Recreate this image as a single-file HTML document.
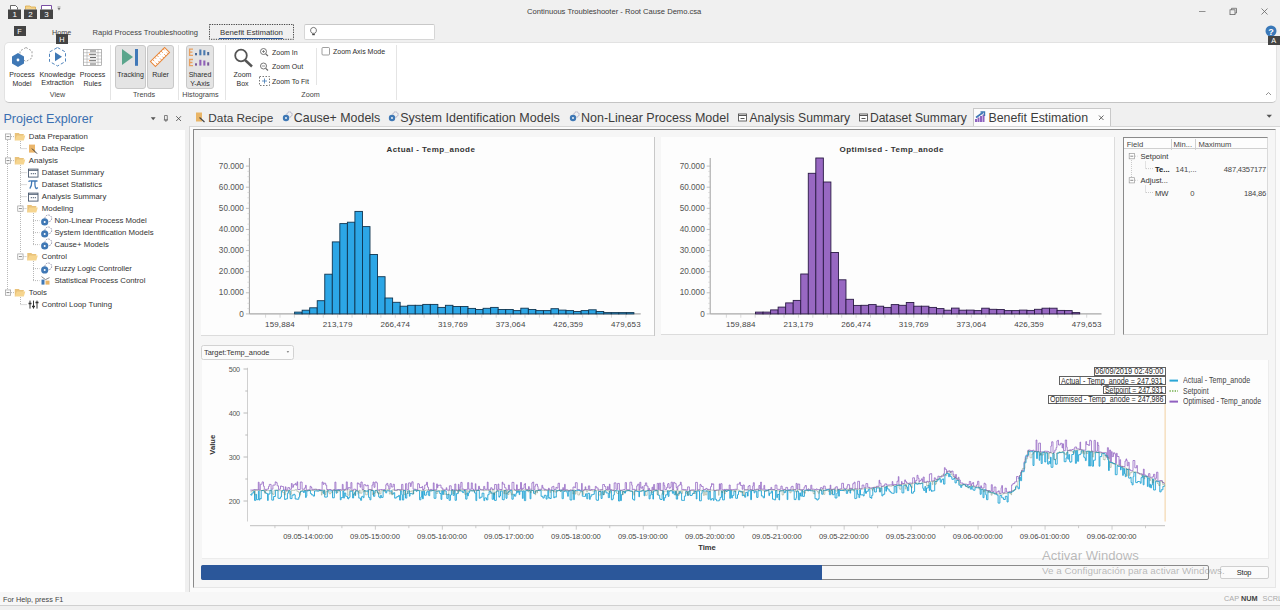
<!DOCTYPE html><html><head><meta charset="utf-8"><style>
html,body{margin:0;padding:0;width:1280px;height:610px;overflow:hidden;background:#f0f0f0;font-family:"Liberation Sans",sans-serif;}
.t{position:absolute;white-space:nowrap;line-height:1;}
.b{position:absolute;box-sizing:border-box;}
svg{position:absolute;overflow:visible;}
</style></head><body>
<div class="t" style="left:527px;top:7.7px;font-size:7.6px;color:#3c3c3c;font-weight:normal;">Continuous Troubleshooter - Root Cause Demo.csa</div>
<svg style="left:0;top:0" width="1280" height="45"><line x1="1199" y1="11.5" x2="1205.5" y2="11.5" stroke="#777" stroke-width="0.8"/><rect x="1230" y="9.8" width="5" height="4.8" fill="none" stroke="#666" stroke-width="0.8"/><path d="M1231.5 9.8 V8.3 H1236.5 V13 H1235" fill="none" stroke="#666" stroke-width="0.8"/><path d="M1261.5 8.5 L1267.5 14.5 M1267.5 8.5 L1261.5 14.5" stroke="#666" stroke-width="0.8"/></svg>
<svg style="left:0;top:0" width="80" height="45"><path d="M10.5 9.5 V5.5 H15.5 L17.5 7.5 V9.5" fill="#fff" stroke="#444" stroke-width="0.8"/><path d="M25.5 9.5 V6 H30 L31 7 H35.5 V9.5" fill="#f5d38a" stroke="#d9a94a" stroke-width="0.8"/><path d="M41.5 9.5 V5.5 H51.5 V9.5" fill="#fff" stroke="#7a4fa3" stroke-width="1"/><rect x="8" y="9.5" width="13" height="9.5" fill="#444"/><rect x="24" y="9.5" width="13" height="9.5" fill="#444"/><rect x="40" y="9.5" width="13" height="9.5" fill="#444"/><path d="M57.5 8 H60.5 L59 10.5 Z" fill="#777"/><line x1="57.5" y1="7" x2="60.5" y2="7" stroke="#777" stroke-width="0.7"/></svg>
<div class="t" style="left:12.5px;top:11px;font-size:8px;color:#fff;font-weight:normal;">1</div>
<div class="t" style="left:28.2px;top:11px;font-size:8px;color:#fff;font-weight:normal;">2</div>
<div class="t" style="left:44.2px;top:11px;font-size:8px;color:#fff;font-weight:normal;">3</div>
<div class="b" style="left:13.5px;top:26px;width:12.5px;height:10px;background:#444"></div>
<div class="t" style="left:17.3px;top:27.7px;font-size:7.3px;color:#fff;font-weight:normal;">F</div>
<div class="t" style="left:52px;top:29.01px;font-size:7.2px;color:#444;font-weight:normal;">Home</div>
<div class="b" style="left:56px;top:34px;width:12px;height:10px;background:#444;z-index:10"></div>
<div class="t" style="left:59.2px;top:35.5px;font-size:7.3px;color:#fff;font-weight:normal;z-index:11">H</div>
<div class="t" style="left:92.5px;top:28.97px;font-size:7.6px;color:#444;font-weight:normal;">Rapid Process Troubleshooting</div>
<svg style="left:0;top:0" width="300" height="45"><rect x="209.5" y="24.5" width="84" height="14.8" fill="none" stroke="#333" stroke-width="0.9" stroke-dasharray="1.3 1.1"/></svg>
<div class="t" style="left:220px;top:29.00px;font-size:7.8px;color:#333;font-weight:normal;">Benefit Estimation</div>
<div class="b" style="left:219px;top:37.5px;width:64px;height:1.5px;background:#2b5797"></div>
<div class="b" style="left:303.6px;top:24.2px;width:131.8px;height:15.4px;background:#fff;border:1px solid #d6d6d6;border-top-color:#c8c8c8;border-radius:2px"></div>
<svg style="left:0;top:0" width="330" height="45"><path d="M312 33.3 Q310.3 31.8 310.6 29.8 Q311 27.5 313.5 27.4 Q316 27.5 316.4 29.8 Q316.7 31.8 315 33.3 Z" fill="none" stroke="#555" stroke-width="0.8"/><line x1="312.2" y1="34.6" x2="314.8" y2="34.6" stroke="#444" stroke-width="1.2"/></svg>
<svg style="left:0;top:0" width="1280" height="50"><circle cx="1271" cy="31" r="5.5" fill="#3a78b8"/><text x="1271" y="34.5" font-size="9" font-weight="bold" fill="#fff" text-anchor="middle" font-family="Liberation Sans">?</text></svg>
<div class="b" style="left:1267.5px;top:35.5px;width:12.5px;height:9px;background:#444;z-index:10"></div>
<div class="t" style="left:1271.2px;top:36.8px;font-size:7.3px;color:#fff;font-weight:normal;z-index:11">A</div>
<div class="b" style="left:4px;top:42px;width:1273px;height:61.2px;background:#fff;border-radius:5px;border:1px solid #e2e2e2;border-bottom:1.2px solid #c4c4c4"></div>
<div class="t" style="left:-78px;width:200px;text-align:center;top:70.87px;font-size:7.0px;color:#2c2c2c;font-weight:normal;">Process</div>
<div class="t" style="left:-78px;width:200px;text-align:center;top:79.57px;font-size:7.0px;color:#2c2c2c;font-weight:normal;">Model</div>
<div class="t" style="left:-42.5px;width:200px;text-align:center;top:70.62px;font-size:7.3px;color:#2c2c2c;font-weight:normal;">Knowledge</div>
<div class="t" style="left:-42.5px;width:200px;text-align:center;top:79.32px;font-size:7.3px;color:#2c2c2c;font-weight:normal;">Extraction</div>
<div class="t" style="left:-7.5px;width:200px;text-align:center;top:70.87px;font-size:7.0px;color:#2c2c2c;font-weight:normal;">Process</div>
<div class="t" style="left:-7.5px;width:200px;text-align:center;top:79.57px;font-size:7.0px;color:#2c2c2c;font-weight:normal;">Rules</div>
<div class="t" style="left:-42.5px;width:200px;text-align:center;top:91.01px;font-size:7.2px;color:#444;font-weight:normal;">View</div>
<div class="b" style="left:110px;top:45px;width:1px;height:55px;background:#e4e4e4"></div>
<div class="b" style="left:177.5px;top:45px;width:1px;height:55px;background:#e4e4e4"></div>
<div class="b" style="left:224.5px;top:45px;width:1px;height:55px;background:#e4e4e4"></div>
<div class="b" style="left:395.5px;top:45px;width:1px;height:55px;background:#e4e4e4"></div>
<div class="b" style="left:315.5px;top:48px;width:1px;height:37px;background:#e4e4e4"></div>
<svg style="left:0;top:0" width="400" height="100"><path d="M26 47.5 L32 51 L32 58 L26 61.5 L20 58 L20 51 Z" fill="none" stroke="#777" stroke-width="0.7" stroke-dasharray="2 1.6"/><path d="M18 53 L24 56.5 L24 63.5 L18 67 L12 63.5 L12 56.5 Z" fill="#3f78b5"/><circle cx="18" cy="60" r="1.4" fill="#fff"/><path d="M57.5 47.5 L65.5 52 L65.5 61.5 L57.5 66 L49.5 61.5 L49.5 52 Z" fill="none" stroke="#3f78b5" stroke-width="0.9" stroke-dasharray="3.2 2"/><path d="M55 52.3 L62 56.8 L55 61.3 Z" fill="#3f78b5"/><rect x="83.5" y="49.5" width="18" height="16" fill="#fff" stroke="#888" stroke-width="0.6"/><path d="M83.5 52.7 H101.5 M83.5 55.9 H101.5 M83.5 59.1 H101.5 M83.5 62.3 H101.5 M87 49.5 V65.5 M98 49.5 V65.5" stroke="#999" stroke-width="0.5"/><path d="M90 51 H96 M90 54.3 H96 M90 57.5 H96 M90 60.7 H96 M90 64 H96" stroke="#444" stroke-width="0.8"/><path d="M89 54.3 h1 M89 60.7 h1" stroke="#e07b39" stroke-width="1"/></svg>
<div class="b" style="left:115.3px;top:45px;width:30.5px;height:43.5px;background:#e4e4e4;border:1px solid #c8c8c8;border-radius:3px"></div>
<div class="b" style="left:146.8px;top:45px;width:27.5px;height:43.5px;background:#e4e4e4;border:1px solid #c8c8c8;border-radius:3px"></div>
<div class="b" style="left:186px;top:45px;width:28px;height:43.5px;background:#e4e4e4;border:1px solid #c8c8c8;border-radius:3px"></div>
<svg style="left:0;top:0" width="400" height="100"><path d="M122 49 L133 57 L122 65 Z" fill="#5aa58c"/><rect x="135" y="49" width="3" height="16.8" fill="#4078b8"/><g transform="translate(160 57) rotate(-45)"><rect x="-10" y="-3.5" width="20" height="7" fill="#fff" stroke="#e8873a" stroke-width="1"/><path d="M-7 -3.5 v2.5 M-4 -3.5 v2 M-1 -3.5 v2.5 M2 -3.5 v2 M5 -3.5 v2.5 M8 -3.5 v2 M-7 3.5 v-2.5 M-4 3.5 v-2 M-1 3.5 v-2.5 M2 3.5 v-2 M5 3.5 v-2.5 M8 3.5 v-2" stroke="#e8873a" stroke-width="0.8"/></g><path d="M193 49.2 H189.6 V55.3 H193 M189.6 52.2 H192.5" fill="none" stroke="#e8a060" stroke-width="1.3"/><path d="M193 59.5 H189.6 V65.6 H193 M189.6 62.5 H192.5" fill="none" stroke="#e8a060" stroke-width="1.3"/><rect x="195" y="53" width="2" height="2.3" fill="#4a6a98"/><rect x="199.3" y="49.5" width="2.1" height="5.8" fill="#4a7ab0"/><rect x="203.3" y="50.2" width="2.1" height="5.1" fill="#4a7ab0"/><rect x="207.2" y="52" width="2" height="3.3" fill="#4a6a98"/><rect x="195" y="63.3" width="2" height="2.3" fill="#7a5a9a"/><rect x="199.3" y="59.8" width="2.1" height="5.8" fill="#9060b8"/><rect x="203.3" y="60.5" width="2.1" height="5.1" fill="#9060b8"/><rect x="207.2" y="62.3" width="2" height="3.3" fill="#7a5a9a"/><circle cx="241" cy="55.5" r="5.8" fill="none" stroke="#555" stroke-width="1.8"/><line x1="245" y1="60" x2="252" y2="66.5" stroke="#555" stroke-width="2.4"/><circle cx="263.5" cy="51.5" r="3" fill="none" stroke="#666" stroke-width="0.9"/><line x1="265.7" y1="53.8" x2="268" y2="56" stroke="#666" stroke-width="1.1"/><path d="M262 51.5 h3 M263.5 50 v3" stroke="#666" stroke-width="0.7"/><circle cx="263.5" cy="66" r="3" fill="none" stroke="#666" stroke-width="0.9"/><line x1="265.7" y1="68.3" x2="268" y2="70.5" stroke="#666" stroke-width="1.1"/><path d="M262 66 h3" stroke="#666" stroke-width="0.7"/><rect x="259.5" y="76.5" width="10" height="9" fill="none" stroke="#555" stroke-width="0.8" stroke-dasharray="1.5 1.5"/><path d="M262 81 h5 M264.5 78.5 v5" stroke="#3f78b5" stroke-width="0.8"/><rect x="322" y="47.5" width="7.5" height="7.5" rx="1" fill="#fff" stroke="#777" stroke-width="0.7"/></svg>
<div class="t" style="left:30.5px;width:200px;text-align:center;top:70.87px;font-size:7.0px;color:#2c2c2c;font-weight:normal;">Tracking</div>
<div class="t" style="left:60.5px;width:200px;text-align:center;top:70.87px;font-size:7.0px;color:#2c2c2c;font-weight:normal;">Ruler</div>
<div class="t" style="left:100px;width:200px;text-align:center;top:70.87px;font-size:7.0px;color:#2c2c2c;font-weight:normal;">Shared</div>
<div class="t" style="left:100px;width:200px;text-align:center;top:79.57px;font-size:7.0px;color:#2c2c2c;font-weight:normal;">Y-Axis</div>
<div class="t" style="left:44px;width:200px;text-align:center;top:91.01px;font-size:7.2px;color:#444;font-weight:normal;">Trends</div>
<div class="t" style="left:100.5px;width:200px;text-align:center;top:91.01px;font-size:7.2px;color:#444;font-weight:normal;">Histograms</div>
<div class="t" style="left:142.5px;width:200px;text-align:center;top:70.87px;font-size:7.0px;color:#2c2c2c;font-weight:normal;">Zoom</div>
<div class="t" style="left:142.5px;width:200px;text-align:center;top:79.57px;font-size:7.0px;color:#2c2c2c;font-weight:normal;">Box</div>
<div class="t" style="left:272px;top:48.57px;font-size:7.0px;color:#2c2c2c;font-weight:normal;">Zoom In</div>
<div class="t" style="left:272px;top:63.07px;font-size:7.0px;color:#2c2c2c;font-weight:normal;">Zoom Out</div>
<div class="t" style="left:272px;top:78.07px;font-size:7.0px;color:#2c2c2c;font-weight:normal;">Zoom To Fit</div>
<div class="t" style="left:333px;top:47.57px;font-size:7.0px;color:#2c2c2c;font-weight:normal;">Zoom Axis Mode</div>
<div class="t" style="left:210.5px;width:200px;text-align:center;top:91.01px;font-size:7.2px;color:#444;font-weight:normal;">Zoom</div>
<svg style="left:0;top:0" width="1280" height="100"><path d="M1266 95 L1268.5 92.5 L1271 95" fill="none" stroke="#777" stroke-width="0.8"/></svg>
<div class="t" style="left:3.4px;top:112.93px;font-size:12.6px;color:#3a6fb0;font-weight:normal;">Project Explorer</div>
<svg style="left:0;top:0" width="200" height="130"><path d="M150.8 117.3 H155.6 L153.2 120.3 Z" fill="#555"/><path d="M164.5 115.5 h2.8 v4.5 h-2.8 z M163.8 120 h4.2 M165.9 120 v2" stroke="#666" stroke-width="0.8" fill="none"/><path d="M176.2 116.2 L181 121 M181 116.2 L176.2 121" stroke="#444" stroke-width="0.8"/></svg>
<div class="b" style="left:0;top:129.5px;width:185px;height:462.5px;background:#fff"></div>
<div class="t" style="left:28.8px;top:132.60px;font-size:7.8px;color:#333;font-weight:normal;">Data Preparation</div>
<div class="t" style="left:41.8px;top:144.60px;font-size:7.8px;color:#333;font-weight:normal;">Data Recipe</div>
<div class="t" style="left:28.8px;top:156.60px;font-size:7.8px;color:#333;font-weight:normal;">Analysis</div>
<div class="t" style="left:41.8px;top:168.60px;font-size:7.8px;color:#333;font-weight:normal;">Dataset Summary</div>
<div class="t" style="left:41.8px;top:180.60px;font-size:7.8px;color:#333;font-weight:normal;">Dataset Statistics</div>
<div class="t" style="left:41.8px;top:192.60px;font-size:7.8px;color:#333;font-weight:normal;">Analysis Summary</div>
<div class="t" style="left:41.8px;top:204.60px;font-size:7.8px;color:#333;font-weight:normal;">Modeling</div>
<div class="t" style="left:54.4px;top:216.60px;font-size:7.8px;color:#333;font-weight:normal;">Non-Linear Process Model</div>
<div class="t" style="left:54.4px;top:228.60px;font-size:7.8px;color:#333;font-weight:normal;">System Identification Models</div>
<div class="t" style="left:54.4px;top:240.60px;font-size:7.8px;color:#333;font-weight:normal;">Cause+ Models</div>
<div class="t" style="left:41.8px;top:252.60px;font-size:7.8px;color:#333;font-weight:normal;">Control</div>
<div class="t" style="left:54.4px;top:264.60px;font-size:7.8px;color:#333;font-weight:normal;">Fuzzy Logic Controller</div>
<div class="t" style="left:54.4px;top:276.60px;font-size:7.8px;color:#333;font-weight:normal;">Statistical Process Control</div>
<div class="t" style="left:28.8px;top:288.60px;font-size:7.8px;color:#333;font-weight:normal;">Tools</div>
<div class="t" style="left:41.8px;top:300.60px;font-size:7.8px;color:#333;font-weight:normal;">Control Loop Tuning</div>
<svg style="left:0;top:0" width="190" height="320"><path d="M7.5 140 V290 M20.5 141 V148.6 M20.5 165 V253 M20.5 297 V304.6 M33.5 213 V244.6 M33.5 261 V280.6" stroke="#999" stroke-width="0.7" stroke-dasharray="1 1" fill="none"/><rect x="5.35" y="133.95" width="5.3" height="5.3" fill="#fff" stroke="#999" stroke-width="0.7"/><path d="M6.5 136.6 h3" stroke="#555" stroke-width="0.7"/><path d="M11.0 136.6 h3" stroke="#999" stroke-width="0.7" stroke-dasharray="1 1"/><path d="M14.8 140.6 V133.1 H18.8 L19.8 134.1 H23.8 V135.4 Z" fill="#e9c27a"/><path d="M14.8 140.6 L16.8 135.4 H25.3 L23.8 140.6 Z" fill="#f6d58f"/><path d="M20.5 148.6 h6.5" stroke="#999" stroke-width="0.7" stroke-dasharray="1 1"/><rect x="29.0" y="144.6" width="6" height="8" fill="#eab56a"/><path d="M32.0 148.6 l5 5" stroke="#333" stroke-width="1"/><rect x="5.35" y="157.95" width="5.3" height="5.3" fill="#fff" stroke="#999" stroke-width="0.7"/><path d="M6.5 160.6 h3" stroke="#555" stroke-width="0.7"/><path d="M11.0 160.6 h3" stroke="#999" stroke-width="0.7" stroke-dasharray="1 1"/><path d="M14.8 164.6 V157.1 H18.8 L19.8 158.1 H23.8 V159.4 Z" fill="#e9c27a"/><path d="M14.8 164.6 L16.8 159.4 H25.3 L23.8 164.6 Z" fill="#f6d58f"/><path d="M20.5 172.6 h6.5" stroke="#999" stroke-width="0.7" stroke-dasharray="1 1"/><rect x="28.5" y="169.1" width="9.5" height="8" fill="#fff" stroke="#4a5a70" stroke-width="0.9"/><path d="M30.8 173.6 h1 M32.8 173.6 h1 M34.8 173.6 h1" stroke="#4a5a70" stroke-width="1.3"/><path d="M28.5 170.29999999999998 h9.5" stroke="#4a5a70" stroke-width="1"/><path d="M20.5 184.6 h6.5" stroke="#999" stroke-width="0.7" stroke-dasharray="1 1"/><path d="M28.5 181.6 Q29.5 180.4 31.0 181.0 H37.5 M31.8 181.0 Q31.8 186.1 29.8 188.6 M35.0 181.0 Q34.6 187.1 36.2 188.6 Q37.0 188.6 37.6 187.4" fill="none" stroke="#3f78b5" stroke-width="1.3"/><path d="M20.5 196.6 h6.5" stroke="#999" stroke-width="0.7" stroke-dasharray="1 1"/><rect x="28.5" y="193.1" width="9.5" height="8" fill="#fff" stroke="#4a5a70" stroke-width="0.9"/><path d="M30.8 197.6 h1 M32.8 197.6 h1 M34.8 197.6 h1" stroke="#4a5a70" stroke-width="1.3"/><path d="M28.5 194.29999999999998 h9.5" stroke="#4a5a70" stroke-width="1"/><rect x="17.75" y="205.95" width="5.3" height="5.3" fill="#fff" stroke="#999" stroke-width="0.7"/><path d="M18.9 208.6 h3" stroke="#555" stroke-width="0.7"/><path d="M23.4 208.6 h3" stroke="#999" stroke-width="0.7" stroke-dasharray="1 1"/><path d="M27.3 212.6 V205.1 H31.3 L32.3 206.1 H36.3 V207.4 Z" fill="#e9c27a"/><path d="M27.3 212.6 L29.3 207.4 H37.8 L36.3 212.6 Z" fill="#f6d58f"/><path d="M33.0 220.6 h6.5" stroke="#999" stroke-width="0.7" stroke-dasharray="1 1"/><circle cx="48.3" cy="218.4" r="3.4" fill="none" stroke="#6a6a8a" stroke-width="0.7" stroke-dasharray="1.6 1"/><circle cx="44.7" cy="221.9" r="3.6" fill="#3f78b5"/><circle cx="44.7" cy="221.9" r="1" fill="#fff"/><path d="M33.0 232.6 h6.5" stroke="#999" stroke-width="0.7" stroke-dasharray="1 1"/><circle cx="48.3" cy="230.4" r="3.4" fill="none" stroke="#6a6a8a" stroke-width="0.7" stroke-dasharray="1.6 1"/><circle cx="44.7" cy="233.9" r="3.6" fill="#3f78b5"/><circle cx="44.7" cy="233.9" r="1" fill="#fff"/><path d="M33.0 244.6 h6.5" stroke="#999" stroke-width="0.7" stroke-dasharray="1 1"/><circle cx="48.3" cy="242.4" r="3.4" fill="none" stroke="#6a6a8a" stroke-width="0.7" stroke-dasharray="1.6 1"/><circle cx="44.7" cy="245.9" r="3.6" fill="#3f78b5"/><circle cx="44.7" cy="245.9" r="1" fill="#fff"/><rect x="17.75" y="253.95000000000002" width="5.3" height="5.3" fill="#fff" stroke="#999" stroke-width="0.7"/><path d="M18.9 256.6 h3" stroke="#555" stroke-width="0.7"/><path d="M23.4 256.6 h3" stroke="#999" stroke-width="0.7" stroke-dasharray="1 1"/><path d="M27.3 260.6 V253.10000000000002 H31.3 L32.3 254.10000000000002 H36.3 V255.40000000000003 Z" fill="#e9c27a"/><path d="M27.3 260.6 L29.3 255.40000000000003 H37.8 L36.3 260.6 Z" fill="#f6d58f"/><path d="M33.0 268.6 h6.5" stroke="#999" stroke-width="0.7" stroke-dasharray="1 1"/><circle cx="48.3" cy="266.40000000000003" r="3.4" fill="none" stroke="#6a6a8a" stroke-width="0.7" stroke-dasharray="1.6 1"/><circle cx="44.7" cy="269.90000000000003" r="3.6" fill="#3f78b5"/><circle cx="44.7" cy="269.90000000000003" r="1" fill="#fff"/><path d="M33.0 280.6 h6.5" stroke="#999" stroke-width="0.7" stroke-dasharray="1 1"/><path d="M41.5 276.6 L45.5 279.6 L49.5 277.6" stroke="#555" stroke-width="0.7" fill="none"/><rect x="41.5" y="279.6" width="3" height="5" fill="#3f78b5"/><rect x="45.5" y="280.6" width="4" height="4" fill="#e9b567"/><rect x="5.35" y="289.95000000000005" width="5.3" height="5.3" fill="#fff" stroke="#999" stroke-width="0.7"/><path d="M6.5 292.6 h3" stroke="#555" stroke-width="0.7"/><path d="M11.0 292.6 h3" stroke="#999" stroke-width="0.7" stroke-dasharray="1 1"/><path d="M14.8 296.6 V289.1 H18.8 L19.8 290.1 H23.8 V291.40000000000003 Z" fill="#e9c27a"/><path d="M14.8 296.6 L16.8 291.40000000000003 H25.3 L23.8 296.6 Z" fill="#f6d58f"/><path d="M20.5 304.6 h6.5" stroke="#999" stroke-width="0.7" stroke-dasharray="1 1"/><path d="M30.0 300.6 v8 M33.5 300.6 v8 M37.0 300.6 v8" stroke="#333" stroke-width="1"/><path d="M28.5 303.6 h3 M32.0 306.6 h3 M35.5 302.6 h3" stroke="#333" stroke-width="1.5"/></svg>
<div class="b" style="left:973px;top:108.2px;width:137.6px;height:20px;background:#fcfcfc;border:1px solid #c9c9c9;border-bottom:none"></div>
<div class="t" style="left:208.3px;top:112.61px;font-size:11.8px;color:#3c3c3c;font-weight:normal;">Data Recipe</div>
<div class="t" style="left:293.8px;top:112.10px;font-size:12.4px;color:#3c3c3c;font-weight:normal;">Cause+ Models</div>
<div class="t" style="left:400.2px;top:111.98px;font-size:12.54px;color:#3c3c3c;font-weight:normal;">System Identification Models</div>
<div class="t" style="left:581px;top:112.02px;font-size:12.5px;color:#3c3c3c;font-weight:normal;">Non-Linear Process Model</div>
<div class="t" style="left:749.4px;top:112.30px;font-size:12.17px;color:#3c3c3c;font-weight:normal;">Analysis Summary</div>
<div class="t" style="left:869.9px;top:112.34px;font-size:12.12px;color:#3c3c3c;font-weight:normal;">Dataset Summary</div>
<svg style="left:0;top:0" width="1280" height="140"><rect x="196" y="112.5" width="6" height="9" fill="#e9b567"/><path d="M199.5 117.5 l5 4.5" stroke="#444" stroke-width="1.1"/><circle cx="289.5" cy="114.5" r="2.6" fill="none" stroke="#6b6b9c" stroke-width="0.7" stroke-dasharray="1.2 0.8"/><circle cx="286" cy="118.0" r="3.2" fill="#3f78b5"/><circle cx="286" cy="118.0" r="0.9" fill="#fff"/><circle cx="395.5" cy="114.5" r="2.6" fill="none" stroke="#6b6b9c" stroke-width="0.7" stroke-dasharray="1.2 0.8"/><circle cx="392" cy="118.0" r="3.2" fill="#3f78b5"/><circle cx="392" cy="118.0" r="0.9" fill="#fff"/><circle cx="576.5" cy="114.5" r="2.6" fill="none" stroke="#6b6b9c" stroke-width="0.7" stroke-dasharray="1.2 0.8"/><circle cx="573" cy="118.0" r="3.2" fill="#3f78b5"/><circle cx="573" cy="118.0" r="0.9" fill="#fff"/><rect x="738.5" y="114.0" width="8" height="7" fill="#fff" stroke="#555" stroke-width="0.9"/><path d="M738.5 115.5 h8 M740.5 118.5 h4" stroke="#555" stroke-width="1"/><rect x="859.5" y="114.0" width="8" height="7" fill="#fff" stroke="#555" stroke-width="0.9"/><path d="M859.5 115.5 h8 M861.5 118.5 h4" stroke="#555" stroke-width="1"/><path d="M976 122 v-3 M978.5 122 v-4.5 M981 122 v-6 M983.5 122 v-7.5" stroke="#8e63c0" stroke-width="2"/><path d="M976 117.5 L983 112.5" stroke="#3f78b5" stroke-width="1.6"/><path d="M980.5 112 H984.5 V116" fill="none" stroke="#3f78b5" stroke-width="1.4"/><path d="M1099 115.5 L1103.5 120 M1103.5 115.5 L1099 120" stroke="#555" stroke-width="0.9"/><path d="M1266.5 114.8 H1272 L1269.25 117.8 Z" fill="#555"/></svg>
<div class="t" style="left:988.5px;top:112.14px;font-size:12.36px;color:#3c3c3c;font-weight:normal;">Benefit Estimation</div>
<div class="b" style="left:189px;top:126.4px;width:1091px;height:465.4px;background:#fbfbfb;border-top:1px solid #d6d6d6;border-left:1px solid #d6d6d6"></div>
<div class="b" style="left:193px;top:129px;width:1083px;height:459px;background:#f6f6f6;border-top:1.2px solid #8a8a8a;border-left:1.2px solid #8a8a8a;border-right:1px solid #e6e6e6;border-bottom:1px solid #e6e6e6"></div>
<div class="b" style="left:201px;top:137px;width:452.5px;height:198.8px;background:#fdfdfd;border-bottom:1px solid #dcdcdc"></div>
<div class="b" style="left:653.5px;top:137px;width:1.5px;height:198.8px;background:#c8c8c8"></div>
<div class="b" style="left:661px;top:137px;width:454px;height:198px;background:#fdfdfd;border-bottom:1px solid #dcdcdc;border-right:1px solid #dcdcdc"></div>
<div class="b" style="left:1123px;top:137.4px;width:145px;height:197.8px;background:#fbfbfb;border-left:1.2px solid #8a8a8a;border-top:1.2px solid #8a8a8a;border-right:1px solid #dadada;border-bottom:1px solid #dadada"></div>
<div class="b" style="left:1124.2px;top:138.6px;width:143px;height:10.8px;background:#fdfdfd;border-bottom:1px solid #d0d0d0"></div>
<div class="b" style="left:1171px;top:139px;width:1px;height:10.5px;background:#d0d0d0"></div>
<div class="b" style="left:1195px;top:139px;width:1px;height:10.5px;background:#d0d0d0"></div>
<div class="t" style="left:1126.7px;top:141.07px;font-size:7.6px;color:#444;font-weight:normal;">Field</div>
<div class="t" style="left:1173.5px;top:141.07px;font-size:7.6px;color:#444;font-weight:normal;">Min...</div>
<div class="t" style="left:1198.5px;top:141.07px;font-size:7.6px;color:#444;font-weight:normal;">Maximum</div>
<svg style="left:0;top:0" width="1280" height="340"><rect x="1129.2" y="153.6" width="5.2" height="5.2" fill="#fff" stroke="#999" stroke-width="0.7"/><path d="M1130.3 156.2 h3" stroke="#555" stroke-width="0.7"/><path d="M1135 156.2 h2.5" stroke="#aaa" stroke-width="0.6" stroke-dasharray="1 1"/><rect x="1129.2" y="177.70000000000002" width="5.2" height="5.2" fill="#fff" stroke="#999" stroke-width="0.7"/><path d="M1130.3 180.3 h3" stroke="#555" stroke-width="0.7"/><path d="M1135 180.3 h2.5" stroke="#aaa" stroke-width="0.6" stroke-dasharray="1 1"/><path d="M1131.5 160 V177 M1145.5 161.5 V168.6 M1146 168.6 H1153 M1145.5 185.5 V192.5 M1146 192.5 H1153" stroke="#aaa" stroke-width="0.6" stroke-dasharray="1 1" fill="none"/></svg>
<div class="t" style="left:1140.5px;top:153.17px;font-size:7.6px;color:#333;font-weight:normal;">Setpoint</div>
<div class="t" style="left:1155px;top:165.57px;font-size:7.6px;color:#222;font-weight:bold;">Te...</div>
<div class="t" style="left:1175.6px;top:165.57px;font-size:7.6px;color:#444;font-weight:normal;">141,...</div>
<div class="t" style="left:966px;width:300px;text-align:right;top:165.57px;font-size:7.6px;color:#444;font-weight:normal;letter-spacing:-0.2px">487,4357177</div>
<div class="t" style="left:1140.5px;top:177.17px;font-size:7.6px;color:#333;font-weight:normal;">Adjust...</div>
<div class="t" style="left:1155px;top:189.57px;font-size:7.6px;color:#333;font-weight:normal;">MW</div>
<div class="t" style="left:894.5px;width:300px;text-align:right;top:189.57px;font-size:7.6px;color:#444;font-weight:normal;">0</div>
<div class="t" style="left:966px;width:300px;text-align:right;top:189.57px;font-size:7.6px;color:#444;font-weight:normal;letter-spacing:-0.2px">184,86</div>
<svg style="left:0;top:0" width="1280" height="340"><line x1="249.4" y1="158" x2="249.4" y2="313.9" stroke="#a0a0a0" stroke-width="1"/><line x1="245.9" y1="313.90" x2="249.4" y2="313.90" stroke="#b0b0b0" stroke-width="0.8"/><line x1="247.4" y1="308.62" x2="249.4" y2="308.62" stroke="#c8c8c8" stroke-width="0.6"/><line x1="247.4" y1="303.34" x2="249.4" y2="303.34" stroke="#c8c8c8" stroke-width="0.6"/><line x1="247.4" y1="298.06" x2="249.4" y2="298.06" stroke="#c8c8c8" stroke-width="0.6"/><line x1="245.9" y1="292.79" x2="249.4" y2="292.79" stroke="#b0b0b0" stroke-width="0.8"/><line x1="247.4" y1="287.51" x2="249.4" y2="287.51" stroke="#c8c8c8" stroke-width="0.6"/><line x1="247.4" y1="282.23" x2="249.4" y2="282.23" stroke="#c8c8c8" stroke-width="0.6"/><line x1="247.4" y1="276.95" x2="249.4" y2="276.95" stroke="#c8c8c8" stroke-width="0.6"/><line x1="245.9" y1="271.67" x2="249.4" y2="271.67" stroke="#b0b0b0" stroke-width="0.8"/><line x1="247.4" y1="266.39" x2="249.4" y2="266.39" stroke="#c8c8c8" stroke-width="0.6"/><line x1="247.4" y1="261.11" x2="249.4" y2="261.11" stroke="#c8c8c8" stroke-width="0.6"/><line x1="247.4" y1="255.84" x2="249.4" y2="255.84" stroke="#c8c8c8" stroke-width="0.6"/><line x1="245.9" y1="250.56" x2="249.4" y2="250.56" stroke="#b0b0b0" stroke-width="0.8"/><line x1="247.4" y1="245.28" x2="249.4" y2="245.28" stroke="#c8c8c8" stroke-width="0.6"/><line x1="247.4" y1="240.00" x2="249.4" y2="240.00" stroke="#c8c8c8" stroke-width="0.6"/><line x1="247.4" y1="234.72" x2="249.4" y2="234.72" stroke="#c8c8c8" stroke-width="0.6"/><line x1="245.9" y1="229.44" x2="249.4" y2="229.44" stroke="#b0b0b0" stroke-width="0.8"/><line x1="247.4" y1="224.16" x2="249.4" y2="224.16" stroke="#c8c8c8" stroke-width="0.6"/><line x1="247.4" y1="218.89" x2="249.4" y2="218.89" stroke="#c8c8c8" stroke-width="0.6"/><line x1="247.4" y1="213.61" x2="249.4" y2="213.61" stroke="#c8c8c8" stroke-width="0.6"/><line x1="245.9" y1="208.33" x2="249.4" y2="208.33" stroke="#b0b0b0" stroke-width="0.8"/><line x1="247.4" y1="203.05" x2="249.4" y2="203.05" stroke="#c8c8c8" stroke-width="0.6"/><line x1="247.4" y1="197.77" x2="249.4" y2="197.77" stroke="#c8c8c8" stroke-width="0.6"/><line x1="247.4" y1="192.49" x2="249.4" y2="192.49" stroke="#c8c8c8" stroke-width="0.6"/><line x1="245.9" y1="187.21" x2="249.4" y2="187.21" stroke="#b0b0b0" stroke-width="0.8"/><line x1="247.4" y1="181.94" x2="249.4" y2="181.94" stroke="#c8c8c8" stroke-width="0.6"/><line x1="247.4" y1="176.66" x2="249.4" y2="176.66" stroke="#c8c8c8" stroke-width="0.6"/><line x1="247.4" y1="171.38" x2="249.4" y2="171.38" stroke="#c8c8c8" stroke-width="0.6"/><line x1="245.9" y1="166.10" x2="249.4" y2="166.10" stroke="#b0b0b0" stroke-width="0.8"/><line x1="249.4" y1="313.9" x2="640.7" y2="313.9" stroke="#a8a8a8" stroke-width="1.3"/><line x1="265.59" y1="313.9" x2="265.59" y2="317.7" stroke="#c0c0c0" stroke-width="0.6"/><line x1="280.00" y1="313.9" x2="280.00" y2="317.7" stroke="#c0c0c0" stroke-width="0.6"/><line x1="294.41" y1="313.9" x2="294.41" y2="317.7" stroke="#c0c0c0" stroke-width="0.6"/><line x1="308.82" y1="313.9" x2="308.82" y2="317.7" stroke="#c0c0c0" stroke-width="0.6"/><line x1="323.24" y1="313.9" x2="323.24" y2="317.7" stroke="#c0c0c0" stroke-width="0.6"/><line x1="337.65" y1="313.9" x2="337.65" y2="317.7" stroke="#c0c0c0" stroke-width="0.6"/><line x1="352.06" y1="313.9" x2="352.06" y2="317.7" stroke="#c0c0c0" stroke-width="0.6"/><line x1="366.48" y1="313.9" x2="366.48" y2="317.7" stroke="#c0c0c0" stroke-width="0.6"/><line x1="380.89" y1="313.9" x2="380.89" y2="317.7" stroke="#c0c0c0" stroke-width="0.6"/><line x1="395.30" y1="313.9" x2="395.30" y2="317.7" stroke="#c0c0c0" stroke-width="0.6"/><line x1="409.71" y1="313.9" x2="409.71" y2="317.7" stroke="#c0c0c0" stroke-width="0.6"/><line x1="424.12" y1="313.9" x2="424.12" y2="317.7" stroke="#c0c0c0" stroke-width="0.6"/><line x1="438.54" y1="313.9" x2="438.54" y2="317.7" stroke="#c0c0c0" stroke-width="0.6"/><line x1="452.95" y1="313.9" x2="452.95" y2="317.7" stroke="#c0c0c0" stroke-width="0.6"/><line x1="467.36" y1="313.9" x2="467.36" y2="317.7" stroke="#c0c0c0" stroke-width="0.6"/><line x1="481.77" y1="313.9" x2="481.77" y2="317.7" stroke="#c0c0c0" stroke-width="0.6"/><line x1="496.19" y1="313.9" x2="496.19" y2="317.7" stroke="#c0c0c0" stroke-width="0.6"/><line x1="510.60" y1="313.9" x2="510.60" y2="317.7" stroke="#c0c0c0" stroke-width="0.6"/><line x1="525.01" y1="313.9" x2="525.01" y2="317.7" stroke="#c0c0c0" stroke-width="0.6"/><line x1="539.42" y1="313.9" x2="539.42" y2="317.7" stroke="#c0c0c0" stroke-width="0.6"/><line x1="553.84" y1="313.9" x2="553.84" y2="317.7" stroke="#c0c0c0" stroke-width="0.6"/><line x1="568.25" y1="313.9" x2="568.25" y2="317.7" stroke="#c0c0c0" stroke-width="0.6"/><line x1="582.66" y1="313.9" x2="582.66" y2="317.7" stroke="#c0c0c0" stroke-width="0.6"/><line x1="597.08" y1="313.9" x2="597.08" y2="317.7" stroke="#c0c0c0" stroke-width="0.6"/><line x1="611.49" y1="313.9" x2="611.49" y2="317.7" stroke="#c0c0c0" stroke-width="0.6"/><line x1="625.90" y1="313.9" x2="625.90" y2="317.7" stroke="#c0c0c0" stroke-width="0.6"/><rect x="294.60" y="312.10" width="7.54" height="1.80" fill="#2ca6e6" stroke="#103550" stroke-width="0.9"/><rect x="302.14" y="310.20" width="7.54" height="3.70" fill="#2ca6e6" stroke="#103550" stroke-width="0.9"/><rect x="309.68" y="307.80" width="7.54" height="6.10" fill="#2ca6e6" stroke="#103550" stroke-width="0.9"/><rect x="317.22" y="300.70" width="7.54" height="13.20" fill="#2ca6e6" stroke="#103550" stroke-width="0.9"/><rect x="324.76" y="274.20" width="7.54" height="39.70" fill="#2ca6e6" stroke="#103550" stroke-width="0.9"/><rect x="332.30" y="241.90" width="7.54" height="72.00" fill="#2ca6e6" stroke="#103550" stroke-width="0.9"/><rect x="339.84" y="223.60" width="7.54" height="90.30" fill="#2ca6e6" stroke="#103550" stroke-width="0.9"/><rect x="347.38" y="222.20" width="7.54" height="91.70" fill="#2ca6e6" stroke="#103550" stroke-width="0.9"/><rect x="354.92" y="211.40" width="7.54" height="102.50" fill="#2ca6e6" stroke="#103550" stroke-width="0.9"/><rect x="362.46" y="226.60" width="7.54" height="87.30" fill="#2ca6e6" stroke="#103550" stroke-width="0.9"/><rect x="370.00" y="254.50" width="7.54" height="59.40" fill="#2ca6e6" stroke="#103550" stroke-width="0.9"/><rect x="377.54" y="276.70" width="7.54" height="37.20" fill="#2ca6e6" stroke="#103550" stroke-width="0.9"/><rect x="385.08" y="298.00" width="7.54" height="15.90" fill="#2ca6e6" stroke="#103550" stroke-width="0.9"/><rect x="392.62" y="302.30" width="7.54" height="11.60" fill="#2ca6e6" stroke="#103550" stroke-width="0.9"/><rect x="400.16" y="306.20" width="7.54" height="7.70" fill="#2ca6e6" stroke="#103550" stroke-width="0.9"/><rect x="407.70" y="305.30" width="7.54" height="8.60" fill="#2ca6e6" stroke="#103550" stroke-width="0.9"/><rect x="415.24" y="305.30" width="7.54" height="8.60" fill="#2ca6e6" stroke="#103550" stroke-width="0.9"/><rect x="422.78" y="304.40" width="7.54" height="9.50" fill="#2ca6e6" stroke="#103550" stroke-width="0.9"/><rect x="430.32" y="304.40" width="7.54" height="9.50" fill="#2ca6e6" stroke="#103550" stroke-width="0.9"/><rect x="437.86" y="307.40" width="7.54" height="6.50" fill="#2ca6e6" stroke="#103550" stroke-width="0.9"/><rect x="445.40" y="305.30" width="7.54" height="8.60" fill="#2ca6e6" stroke="#103550" stroke-width="0.9"/><rect x="452.94" y="306.50" width="7.54" height="7.40" fill="#2ca6e6" stroke="#103550" stroke-width="0.9"/><rect x="460.48" y="306.50" width="7.54" height="7.40" fill="#2ca6e6" stroke="#103550" stroke-width="0.9"/><rect x="468.02" y="308.40" width="7.54" height="5.50" fill="#2ca6e6" stroke="#103550" stroke-width="0.9"/><rect x="475.56" y="309.50" width="7.54" height="4.40" fill="#2ca6e6" stroke="#103550" stroke-width="0.9"/><rect x="483.10" y="308.30" width="7.54" height="5.60" fill="#2ca6e6" stroke="#103550" stroke-width="0.9"/><rect x="490.64" y="307.40" width="7.54" height="6.50" fill="#2ca6e6" stroke="#103550" stroke-width="0.9"/><rect x="498.18" y="309.50" width="7.54" height="4.40" fill="#2ca6e6" stroke="#103550" stroke-width="0.9"/><rect x="505.72" y="309.50" width="7.54" height="4.40" fill="#2ca6e6" stroke="#103550" stroke-width="0.9"/><rect x="513.26" y="310.60" width="7.54" height="3.30" fill="#2ca6e6" stroke="#103550" stroke-width="0.9"/><rect x="520.80" y="308.20" width="7.54" height="5.70" fill="#2ca6e6" stroke="#103550" stroke-width="0.9"/><rect x="528.34" y="309.50" width="7.54" height="4.40" fill="#2ca6e6" stroke="#103550" stroke-width="0.9"/><rect x="535.88" y="310.60" width="7.54" height="3.30" fill="#2ca6e6" stroke="#103550" stroke-width="0.9"/><rect x="543.42" y="310.60" width="7.54" height="3.30" fill="#2ca6e6" stroke="#103550" stroke-width="0.9"/><rect x="550.96" y="308.70" width="7.54" height="5.20" fill="#2ca6e6" stroke="#103550" stroke-width="0.9"/><rect x="558.50" y="310.10" width="7.54" height="3.80" fill="#2ca6e6" stroke="#103550" stroke-width="0.9"/><rect x="566.04" y="310.60" width="7.54" height="3.30" fill="#2ca6e6" stroke="#103550" stroke-width="0.9"/><rect x="573.58" y="311.50" width="7.54" height="2.40" fill="#2ca6e6" stroke="#103550" stroke-width="0.9"/><rect x="581.12" y="310.60" width="7.54" height="3.30" fill="#2ca6e6" stroke="#103550" stroke-width="0.9"/><rect x="588.66" y="309.80" width="7.54" height="4.10" fill="#2ca6e6" stroke="#103550" stroke-width="0.9"/><rect x="596.20" y="311.50" width="7.54" height="2.40" fill="#2ca6e6" stroke="#103550" stroke-width="0.9"/><rect x="603.74" y="312.60" width="7.54" height="1.30" fill="#2ca6e6" stroke="#103550" stroke-width="0.9"/><rect x="611.28" y="312.60" width="7.54" height="1.30" fill="#2ca6e6" stroke="#103550" stroke-width="0.9"/><rect x="618.82" y="312.60" width="7.54" height="1.30" fill="#2ca6e6" stroke="#103550" stroke-width="0.9"/><rect x="626.36" y="312.60" width="7.54" height="1.30" fill="#2ca6e6" stroke="#103550" stroke-width="0.9"/></svg>
<div class="t" style="left:-56.099999999999994px;width:300px;text-align:right;top:310.56px;font-size:8.2px;color:#555;font-weight:normal;">0</div>
<div class="t" style="left:-56.099999999999994px;width:300px;text-align:right;top:289.44px;font-size:8.2px;color:#555;font-weight:normal;">10.000</div>
<div class="t" style="left:-56.099999999999994px;width:300px;text-align:right;top:268.33px;font-size:8.2px;color:#555;font-weight:normal;">20.000</div>
<div class="t" style="left:-56.099999999999994px;width:300px;text-align:right;top:247.22px;font-size:8.2px;color:#555;font-weight:normal;">30.000</div>
<div class="t" style="left:-56.099999999999994px;width:300px;text-align:right;top:226.10px;font-size:8.2px;color:#555;font-weight:normal;">40.000</div>
<div class="t" style="left:-56.099999999999994px;width:300px;text-align:right;top:204.99px;font-size:8.2px;color:#555;font-weight:normal;">50.000</div>
<div class="t" style="left:-56.099999999999994px;width:300px;text-align:right;top:183.87px;font-size:8.2px;color:#555;font-weight:normal;">60.000</div>
<div class="t" style="left:-56.099999999999994px;width:300px;text-align:right;top:162.76px;font-size:8.2px;color:#555;font-weight:normal;">70.000</div>
<div class="t" style="left:180.0px;width:200px;text-align:center;top:321.33px;font-size:8.0px;color:#444;font-weight:normal;letter-spacing:0.12px">159,884</div>
<div class="t" style="left:237.64999999999998px;width:200px;text-align:center;top:321.33px;font-size:8.0px;color:#444;font-weight:normal;letter-spacing:0.12px">213,179</div>
<div class="t" style="left:295.3px;width:200px;text-align:center;top:321.33px;font-size:8.0px;color:#444;font-weight:normal;letter-spacing:0.12px">266,474</div>
<div class="t" style="left:352.95px;width:200px;text-align:center;top:321.33px;font-size:8.0px;color:#444;font-weight:normal;letter-spacing:0.12px">319,769</div>
<div class="t" style="left:410.6px;width:200px;text-align:center;top:321.33px;font-size:8.0px;color:#444;font-weight:normal;letter-spacing:0.12px">373,064</div>
<div class="t" style="left:468.25px;width:200px;text-align:center;top:321.33px;font-size:8.0px;color:#444;font-weight:normal;letter-spacing:0.12px">426,359</div>
<div class="t" style="left:525.9px;width:200px;text-align:center;top:321.33px;font-size:8.0px;color:#444;font-weight:normal;letter-spacing:0.12px">479,653</div>
<div class="t" style="left:330.9px;width:200px;text-align:center;top:146.33px;font-size:8px;color:#333;font-weight:bold;letter-spacing:0.45px">Actual - Temp_anode</div>
<svg style="left:0;top:0" width="1280" height="340"><line x1="710.2" y1="158" x2="710.2" y2="313.9" stroke="#a0a0a0" stroke-width="1"/><line x1="706.7" y1="313.90" x2="710.2" y2="313.90" stroke="#b0b0b0" stroke-width="0.8"/><line x1="708.2" y1="308.62" x2="710.2" y2="308.62" stroke="#c8c8c8" stroke-width="0.6"/><line x1="708.2" y1="303.34" x2="710.2" y2="303.34" stroke="#c8c8c8" stroke-width="0.6"/><line x1="708.2" y1="298.06" x2="710.2" y2="298.06" stroke="#c8c8c8" stroke-width="0.6"/><line x1="706.7" y1="292.79" x2="710.2" y2="292.79" stroke="#b0b0b0" stroke-width="0.8"/><line x1="708.2" y1="287.51" x2="710.2" y2="287.51" stroke="#c8c8c8" stroke-width="0.6"/><line x1="708.2" y1="282.23" x2="710.2" y2="282.23" stroke="#c8c8c8" stroke-width="0.6"/><line x1="708.2" y1="276.95" x2="710.2" y2="276.95" stroke="#c8c8c8" stroke-width="0.6"/><line x1="706.7" y1="271.67" x2="710.2" y2="271.67" stroke="#b0b0b0" stroke-width="0.8"/><line x1="708.2" y1="266.39" x2="710.2" y2="266.39" stroke="#c8c8c8" stroke-width="0.6"/><line x1="708.2" y1="261.11" x2="710.2" y2="261.11" stroke="#c8c8c8" stroke-width="0.6"/><line x1="708.2" y1="255.84" x2="710.2" y2="255.84" stroke="#c8c8c8" stroke-width="0.6"/><line x1="706.7" y1="250.56" x2="710.2" y2="250.56" stroke="#b0b0b0" stroke-width="0.8"/><line x1="708.2" y1="245.28" x2="710.2" y2="245.28" stroke="#c8c8c8" stroke-width="0.6"/><line x1="708.2" y1="240.00" x2="710.2" y2="240.00" stroke="#c8c8c8" stroke-width="0.6"/><line x1="708.2" y1="234.72" x2="710.2" y2="234.72" stroke="#c8c8c8" stroke-width="0.6"/><line x1="706.7" y1="229.44" x2="710.2" y2="229.44" stroke="#b0b0b0" stroke-width="0.8"/><line x1="708.2" y1="224.16" x2="710.2" y2="224.16" stroke="#c8c8c8" stroke-width="0.6"/><line x1="708.2" y1="218.89" x2="710.2" y2="218.89" stroke="#c8c8c8" stroke-width="0.6"/><line x1="708.2" y1="213.61" x2="710.2" y2="213.61" stroke="#c8c8c8" stroke-width="0.6"/><line x1="706.7" y1="208.33" x2="710.2" y2="208.33" stroke="#b0b0b0" stroke-width="0.8"/><line x1="708.2" y1="203.05" x2="710.2" y2="203.05" stroke="#c8c8c8" stroke-width="0.6"/><line x1="708.2" y1="197.77" x2="710.2" y2="197.77" stroke="#c8c8c8" stroke-width="0.6"/><line x1="708.2" y1="192.49" x2="710.2" y2="192.49" stroke="#c8c8c8" stroke-width="0.6"/><line x1="706.7" y1="187.21" x2="710.2" y2="187.21" stroke="#b0b0b0" stroke-width="0.8"/><line x1="708.2" y1="181.94" x2="710.2" y2="181.94" stroke="#c8c8c8" stroke-width="0.6"/><line x1="708.2" y1="176.66" x2="710.2" y2="176.66" stroke="#c8c8c8" stroke-width="0.6"/><line x1="708.2" y1="171.38" x2="710.2" y2="171.38" stroke="#c8c8c8" stroke-width="0.6"/><line x1="706.7" y1="166.10" x2="710.2" y2="166.10" stroke="#b0b0b0" stroke-width="0.8"/><line x1="710.2" y1="313.9" x2="1101.5" y2="313.9" stroke="#a8a8a8" stroke-width="1.3"/><line x1="726.39" y1="313.9" x2="726.39" y2="317.7" stroke="#c0c0c0" stroke-width="0.6"/><line x1="740.80" y1="313.9" x2="740.80" y2="317.7" stroke="#c0c0c0" stroke-width="0.6"/><line x1="755.21" y1="313.9" x2="755.21" y2="317.7" stroke="#c0c0c0" stroke-width="0.6"/><line x1="769.62" y1="313.9" x2="769.62" y2="317.7" stroke="#c0c0c0" stroke-width="0.6"/><line x1="784.04" y1="313.9" x2="784.04" y2="317.7" stroke="#c0c0c0" stroke-width="0.6"/><line x1="798.45" y1="313.9" x2="798.45" y2="317.7" stroke="#c0c0c0" stroke-width="0.6"/><line x1="812.86" y1="313.9" x2="812.86" y2="317.7" stroke="#c0c0c0" stroke-width="0.6"/><line x1="827.27" y1="313.9" x2="827.27" y2="317.7" stroke="#c0c0c0" stroke-width="0.6"/><line x1="841.69" y1="313.9" x2="841.69" y2="317.7" stroke="#c0c0c0" stroke-width="0.6"/><line x1="856.10" y1="313.9" x2="856.10" y2="317.7" stroke="#c0c0c0" stroke-width="0.6"/><line x1="870.51" y1="313.9" x2="870.51" y2="317.7" stroke="#c0c0c0" stroke-width="0.6"/><line x1="884.92" y1="313.9" x2="884.92" y2="317.7" stroke="#c0c0c0" stroke-width="0.6"/><line x1="899.34" y1="313.9" x2="899.34" y2="317.7" stroke="#c0c0c0" stroke-width="0.6"/><line x1="913.75" y1="313.9" x2="913.75" y2="317.7" stroke="#c0c0c0" stroke-width="0.6"/><line x1="928.16" y1="313.9" x2="928.16" y2="317.7" stroke="#c0c0c0" stroke-width="0.6"/><line x1="942.57" y1="313.9" x2="942.57" y2="317.7" stroke="#c0c0c0" stroke-width="0.6"/><line x1="956.99" y1="313.9" x2="956.99" y2="317.7" stroke="#c0c0c0" stroke-width="0.6"/><line x1="971.40" y1="313.9" x2="971.40" y2="317.7" stroke="#c0c0c0" stroke-width="0.6"/><line x1="985.81" y1="313.9" x2="985.81" y2="317.7" stroke="#c0c0c0" stroke-width="0.6"/><line x1="1000.22" y1="313.9" x2="1000.22" y2="317.7" stroke="#c0c0c0" stroke-width="0.6"/><line x1="1014.64" y1="313.9" x2="1014.64" y2="317.7" stroke="#c0c0c0" stroke-width="0.6"/><line x1="1029.05" y1="313.9" x2="1029.05" y2="317.7" stroke="#c0c0c0" stroke-width="0.6"/><line x1="1043.46" y1="313.9" x2="1043.46" y2="317.7" stroke="#c0c0c0" stroke-width="0.6"/><line x1="1057.88" y1="313.9" x2="1057.88" y2="317.7" stroke="#c0c0c0" stroke-width="0.6"/><line x1="1072.29" y1="313.9" x2="1072.29" y2="317.7" stroke="#c0c0c0" stroke-width="0.6"/><line x1="1086.70" y1="313.9" x2="1086.70" y2="317.7" stroke="#c0c0c0" stroke-width="0.6"/><rect x="755.50" y="312.10" width="7.54" height="1.80" fill="#9868c2" stroke="#2a1a45" stroke-width="0.9"/><rect x="763.04" y="312.10" width="7.54" height="1.80" fill="#9868c2" stroke="#2a1a45" stroke-width="0.9"/><rect x="770.58" y="309.90" width="7.54" height="4.00" fill="#9868c2" stroke="#2a1a45" stroke-width="0.9"/><rect x="778.12" y="307.10" width="7.54" height="6.80" fill="#9868c2" stroke="#2a1a45" stroke-width="0.9"/><rect x="785.66" y="302.90" width="7.54" height="11.00" fill="#9868c2" stroke="#2a1a45" stroke-width="0.9"/><rect x="793.20" y="300.40" width="7.54" height="13.50" fill="#9868c2" stroke="#2a1a45" stroke-width="0.9"/><rect x="800.74" y="274.00" width="7.54" height="39.90" fill="#9868c2" stroke="#2a1a45" stroke-width="0.9"/><rect x="808.28" y="173.30" width="7.54" height="140.60" fill="#9868c2" stroke="#2a1a45" stroke-width="0.9"/><rect x="815.82" y="158.00" width="7.54" height="155.90" fill="#9868c2" stroke="#2a1a45" stroke-width="0.9"/><rect x="823.36" y="182.00" width="7.54" height="131.90" fill="#9868c2" stroke="#2a1a45" stroke-width="0.9"/><rect x="830.90" y="252.50" width="7.54" height="61.40" fill="#9868c2" stroke="#2a1a45" stroke-width="0.9"/><rect x="838.44" y="279.80" width="7.54" height="34.10" fill="#9868c2" stroke="#2a1a45" stroke-width="0.9"/><rect x="845.98" y="299.30" width="7.54" height="14.60" fill="#9868c2" stroke="#2a1a45" stroke-width="0.9"/><rect x="853.52" y="305.40" width="7.54" height="8.50" fill="#9868c2" stroke="#2a1a45" stroke-width="0.9"/><rect x="861.06" y="305.30" width="7.54" height="8.60" fill="#9868c2" stroke="#2a1a45" stroke-width="0.9"/><rect x="868.60" y="304.60" width="7.54" height="9.30" fill="#9868c2" stroke="#2a1a45" stroke-width="0.9"/><rect x="876.14" y="306.20" width="7.54" height="7.70" fill="#9868c2" stroke="#2a1a45" stroke-width="0.9"/><rect x="883.68" y="307.40" width="7.54" height="6.50" fill="#9868c2" stroke="#2a1a45" stroke-width="0.9"/><rect x="891.22" y="304.60" width="7.54" height="9.30" fill="#9868c2" stroke="#2a1a45" stroke-width="0.9"/><rect x="898.76" y="305.30" width="7.54" height="8.60" fill="#9868c2" stroke="#2a1a45" stroke-width="0.9"/><rect x="906.30" y="302.50" width="7.54" height="11.40" fill="#9868c2" stroke="#2a1a45" stroke-width="0.9"/><rect x="913.84" y="306.20" width="7.54" height="7.70" fill="#9868c2" stroke="#2a1a45" stroke-width="0.9"/><rect x="921.38" y="306.20" width="7.54" height="7.70" fill="#9868c2" stroke="#2a1a45" stroke-width="0.9"/><rect x="928.92" y="307.40" width="7.54" height="6.50" fill="#9868c2" stroke="#2a1a45" stroke-width="0.9"/><rect x="936.46" y="308.60" width="7.54" height="5.30" fill="#9868c2" stroke="#2a1a45" stroke-width="0.9"/><rect x="944.00" y="310.20" width="7.54" height="3.70" fill="#9868c2" stroke="#2a1a45" stroke-width="0.9"/><rect x="951.54" y="308.10" width="7.54" height="5.80" fill="#9868c2" stroke="#2a1a45" stroke-width="0.9"/><rect x="959.08" y="310.20" width="7.54" height="3.70" fill="#9868c2" stroke="#2a1a45" stroke-width="0.9"/><rect x="966.62" y="310.10" width="7.54" height="3.80" fill="#9868c2" stroke="#2a1a45" stroke-width="0.9"/><rect x="974.16" y="310.60" width="7.54" height="3.30" fill="#9868c2" stroke="#2a1a45" stroke-width="0.9"/><rect x="981.70" y="308.20" width="7.54" height="5.70" fill="#9868c2" stroke="#2a1a45" stroke-width="0.9"/><rect x="989.24" y="309.30" width="7.54" height="4.60" fill="#9868c2" stroke="#2a1a45" stroke-width="0.9"/><rect x="996.78" y="309.50" width="7.54" height="4.40" fill="#9868c2" stroke="#2a1a45" stroke-width="0.9"/><rect x="1004.32" y="310.60" width="7.54" height="3.30" fill="#9868c2" stroke="#2a1a45" stroke-width="0.9"/><rect x="1011.86" y="310.60" width="7.54" height="3.30" fill="#9868c2" stroke="#2a1a45" stroke-width="0.9"/><rect x="1019.40" y="310.10" width="7.54" height="3.80" fill="#9868c2" stroke="#2a1a45" stroke-width="0.9"/><rect x="1026.94" y="310.40" width="7.54" height="3.50" fill="#9868c2" stroke="#2a1a45" stroke-width="0.9"/><rect x="1034.48" y="309.30" width="7.54" height="4.60" fill="#9868c2" stroke="#2a1a45" stroke-width="0.9"/><rect x="1042.02" y="308.20" width="7.54" height="5.70" fill="#9868c2" stroke="#2a1a45" stroke-width="0.9"/><rect x="1049.56" y="308.20" width="7.54" height="5.70" fill="#9868c2" stroke="#2a1a45" stroke-width="0.9"/><rect x="1057.10" y="310.40" width="7.54" height="3.50" fill="#9868c2" stroke="#2a1a45" stroke-width="0.9"/><rect x="1064.64" y="310.60" width="7.54" height="3.30" fill="#9868c2" stroke="#2a1a45" stroke-width="0.9"/><rect x="1072.18" y="312.60" width="7.54" height="1.30" fill="#9868c2" stroke="#2a1a45" stroke-width="0.9"/></svg>
<div class="t" style="left:404.70000000000005px;width:300px;text-align:right;top:310.56px;font-size:8.2px;color:#555;font-weight:normal;">0</div>
<div class="t" style="left:404.70000000000005px;width:300px;text-align:right;top:289.44px;font-size:8.2px;color:#555;font-weight:normal;">10.000</div>
<div class="t" style="left:404.70000000000005px;width:300px;text-align:right;top:268.33px;font-size:8.2px;color:#555;font-weight:normal;">20.000</div>
<div class="t" style="left:404.70000000000005px;width:300px;text-align:right;top:247.22px;font-size:8.2px;color:#555;font-weight:normal;">30.000</div>
<div class="t" style="left:404.70000000000005px;width:300px;text-align:right;top:226.10px;font-size:8.2px;color:#555;font-weight:normal;">40.000</div>
<div class="t" style="left:404.70000000000005px;width:300px;text-align:right;top:204.99px;font-size:8.2px;color:#555;font-weight:normal;">50.000</div>
<div class="t" style="left:404.70000000000005px;width:300px;text-align:right;top:183.87px;font-size:8.2px;color:#555;font-weight:normal;">60.000</div>
<div class="t" style="left:404.70000000000005px;width:300px;text-align:right;top:162.76px;font-size:8.2px;color:#555;font-weight:normal;">70.000</div>
<div class="t" style="left:640.8px;width:200px;text-align:center;top:321.33px;font-size:8.0px;color:#444;font-weight:normal;letter-spacing:0.12px">159,884</div>
<div class="t" style="left:698.4499999999999px;width:200px;text-align:center;top:321.33px;font-size:8.0px;color:#444;font-weight:normal;letter-spacing:0.12px">213,179</div>
<div class="t" style="left:756.0999999999999px;width:200px;text-align:center;top:321.33px;font-size:8.0px;color:#444;font-weight:normal;letter-spacing:0.12px">266,474</div>
<div class="t" style="left:813.75px;width:200px;text-align:center;top:321.33px;font-size:8.0px;color:#444;font-weight:normal;letter-spacing:0.12px">319,769</div>
<div class="t" style="left:871.4px;width:200px;text-align:center;top:321.33px;font-size:8.0px;color:#444;font-weight:normal;letter-spacing:0.12px">373,064</div>
<div class="t" style="left:929.05px;width:200px;text-align:center;top:321.33px;font-size:8.0px;color:#444;font-weight:normal;letter-spacing:0.12px">426,359</div>
<div class="t" style="left:986.6999999999998px;width:200px;text-align:center;top:321.33px;font-size:8.0px;color:#444;font-weight:normal;letter-spacing:0.12px">479,653</div>
<div class="t" style="left:791.7px;width:200px;text-align:center;top:146.33px;font-size:8px;color:#333;font-weight:bold;letter-spacing:0.42px">Optimised - Temp_anode</div>
<div class="b" style="left:202px;top:360px;width:1066.5px;height:199.3px;background:#fdfdfd;border-right:1px solid #ececec;border-bottom:1px solid #ececec"></div>
<div class="b" style="left:201.4px;top:344.5px;width:92.8px;height:15px;background:#fbfbfb;border:1px solid #d2d2d2;border-radius:2.5px"></div>
<div class="t" style="left:203.8px;top:348.53px;font-size:8.0px;color:#333;font-weight:normal;transform:scaleX(0.9249);transform-origin:0 0;">Target:Temp_anode</div>
<svg style="left:0;top:0" width="300" height="360"><path d="M286.6 351.3 h2.6 l-1.3 1.4 z" fill="#666"/></svg>
<svg style="left:0;top:0" width="1280" height="600"><line x1="247.5" y1="367.8" x2="247.5" y2="521.5" stroke="#c4c4c4" stroke-width="0.8"/><line x1="243.5" y1="369" x2="247.5" y2="369" stroke="#a8a8a8" stroke-width="0.8"/><line x1="245.3" y1="391" x2="247.5" y2="391" stroke="#a8a8a8" stroke-width="0.8"/><line x1="243.5" y1="413" x2="247.5" y2="413" stroke="#a8a8a8" stroke-width="0.8"/><line x1="245.3" y1="435" x2="247.5" y2="435" stroke="#a8a8a8" stroke-width="0.8"/><line x1="243.5" y1="457" x2="247.5" y2="457" stroke="#a8a8a8" stroke-width="0.8"/><line x1="245.3" y1="479" x2="247.5" y2="479" stroke="#a8a8a8" stroke-width="0.8"/><line x1="243.5" y1="501" x2="247.5" y2="501" stroke="#a8a8a8" stroke-width="0.8"/><line x1="250" y1="525.7" x2="1165" y2="525.7" stroke="#b8b8b8" stroke-width="0.9"/><line x1="274.91" y1="525.7" x2="274.91" y2="528.2" stroke="#b8b8b8" stroke-width="0.7"/><line x1="308.40" y1="525.7" x2="308.40" y2="529.7" stroke="#b8b8b8" stroke-width="0.7"/><line x1="341.88" y1="525.7" x2="341.88" y2="528.2" stroke="#b8b8b8" stroke-width="0.7"/><line x1="375.37" y1="525.7" x2="375.37" y2="529.7" stroke="#b8b8b8" stroke-width="0.7"/><line x1="408.85" y1="525.7" x2="408.85" y2="528.2" stroke="#b8b8b8" stroke-width="0.7"/><line x1="442.34" y1="525.7" x2="442.34" y2="529.7" stroke="#b8b8b8" stroke-width="0.7"/><line x1="475.82" y1="525.7" x2="475.82" y2="528.2" stroke="#b8b8b8" stroke-width="0.7"/><line x1="509.31" y1="525.7" x2="509.31" y2="529.7" stroke="#b8b8b8" stroke-width="0.7"/><line x1="542.79" y1="525.7" x2="542.79" y2="528.2" stroke="#b8b8b8" stroke-width="0.7"/><line x1="576.28" y1="525.7" x2="576.28" y2="529.7" stroke="#b8b8b8" stroke-width="0.7"/><line x1="609.76" y1="525.7" x2="609.76" y2="528.2" stroke="#b8b8b8" stroke-width="0.7"/><line x1="643.25" y1="525.7" x2="643.25" y2="529.7" stroke="#b8b8b8" stroke-width="0.7"/><line x1="676.73" y1="525.7" x2="676.73" y2="528.2" stroke="#b8b8b8" stroke-width="0.7"/><line x1="710.22" y1="525.7" x2="710.22" y2="529.7" stroke="#b8b8b8" stroke-width="0.7"/><line x1="743.70" y1="525.7" x2="743.70" y2="528.2" stroke="#b8b8b8" stroke-width="0.7"/><line x1="777.19" y1="525.7" x2="777.19" y2="529.7" stroke="#b8b8b8" stroke-width="0.7"/><line x1="810.67" y1="525.7" x2="810.67" y2="528.2" stroke="#b8b8b8" stroke-width="0.7"/><line x1="844.16" y1="525.7" x2="844.16" y2="529.7" stroke="#b8b8b8" stroke-width="0.7"/><line x1="877.64" y1="525.7" x2="877.64" y2="528.2" stroke="#b8b8b8" stroke-width="0.7"/><line x1="911.13" y1="525.7" x2="911.13" y2="529.7" stroke="#b8b8b8" stroke-width="0.7"/><line x1="944.62" y1="525.7" x2="944.62" y2="528.2" stroke="#b8b8b8" stroke-width="0.7"/><line x1="978.10" y1="525.7" x2="978.10" y2="529.7" stroke="#b8b8b8" stroke-width="0.7"/><line x1="1011.58" y1="525.7" x2="1011.58" y2="528.2" stroke="#b8b8b8" stroke-width="0.7"/><line x1="1045.07" y1="525.7" x2="1045.07" y2="529.7" stroke="#b8b8b8" stroke-width="0.7"/><line x1="1078.55" y1="525.7" x2="1078.55" y2="528.2" stroke="#b8b8b8" stroke-width="0.7"/><line x1="1112.04" y1="525.7" x2="1112.04" y2="529.7" stroke="#b8b8b8" stroke-width="0.7"/><line x1="1145.53" y1="525.7" x2="1145.53" y2="528.2" stroke="#b8b8b8" stroke-width="0.7"/><path d="M250.3 490.1V490.1H252.1V490.1H252.9V489.9H254.1V489.5H254.9V489.8H257.5V490.0H258.3V482.2H259.1V490.0H260.3V484.2H262.1V481.9H262.7V482.0H263.5V486.3H264.3V489.3H265.5V490.3H266.7V489.1H268.5V486.5H269.3V484.4H271.1V489.2H272.9V485.1H273.9V485.1H275.2V481.9H276.2V482.7H277.2V485.8H278.5V489.6H279.3V489.2H280.5V486.0H281.8V486.6H283.6V490.1H285.4V486.8H286.0V490.2H287.8V487.6H289.6V489.3H291.4V483.5H292.2V487.2H293.5V484.7H295.3V483.4H296.1V485.2H297.1V481.8H297.7V489.5H300.3V482.0H302.1V489.2H304.7V487.8H305.5V485.3H306.3V490.3H307.5V489.9H310.1V486.3H311.1V487.5H311.9V489.9H313.1V489.3H314.9V489.2H316.7V489.9H318.5V489.5H320.3V490.1H322.1V482.0H323.1V484.4H323.9V483.2H325.7V485.2H326.7V489.5H328.5V489.5H331.1V490.3H333.7V489.7H334.9V482.1H335.9V490.0H336.7V489.8H337.9V489.5H340.5V490.0H342.3V484.4H343.1V489.4H344.3V490.3H345.1V489.2H346.3V481.9H347.3V489.6H348.1V487.7H349.9V488.2H350.9V482.6H351.9V490.3H353.7V489.2H355.5V490.2H357.3V482.9H358.3V484.0H360.1V487.2H360.9V482.0H362.2V489.5H363.0V489.6H363.8V484.7H365.6V485.8H367.4V485.0H368.2V489.6H370.8V489.8H372.0V485.0H373.0V482.1H374.0V487.3H375.0V482.0H376.8V483.1H377.4V489.7H378.2V490.2H379.4V489.7H380.6V489.5H382.4V489.7H385.0V489.1H385.8V484.7H386.8V483.4H387.8V485.9H388.8V489.1H390.0V483.7H391.3V487.0H393.1V484.3H394.4V490.1H397.0V489.6H399.6V490.2H400.8V489.5H401.6V484.4H402.9V490.2H405.5V483.7H406.8V489.7H408.6V482.9H410.4V486.5H411.2V483.9H411.8V481.8H413.1V489.2H415.7V489.8H416.9V490.0H417.7V483.6H418.7V484.2H419.5V487.8H420.3V487.5H422.1V486.4H422.7V490.0H423.5V489.1H424.7V485.0H426.5V482.3H427.5V487.2H428.5V490.2H430.3V489.4H431.5V490.1H433.3V482.9H434.1V490.0H436.7V483.9H437.3V487.6H437.9V485.3H439.7V485.1H441.0V488.0H442.8V490.1H443.6V489.9H446.2V487.7H446.8V490.1H449.4V485.8H451.2V489.5H453.0V490.1H454.8V484.0H455.8V490.3H458.4V484.3H459.0V489.6H460.2V487.0H460.8V482.4H462.1V489.1H463.9V489.5H466.5V489.3H467.7V482.6H468.7V489.3H471.3V482.9H472.3V489.1H473.5V490.2H475.3V483.7H475.9V490.1H478.5V486.3H479.5V489.1H480.7V489.9H481.9V489.9H483.7V486.4H484.7V489.3H487.3V482.1H488.1V490.0H490.7V487.8H492.0V489.3H494.6V484.5H496.4V489.4H497.2V490.2H498.0V484.0H498.8V489.2H499.6V489.5H502.2V482.1H502.8V484.1H504.6V487.7H505.4V487.7H506.0V489.9H507.2V489.9H508.4V485.1H509.4V489.8H512.0V482.3H512.6V482.4H513.9V489.3H514.7V490.1H516.5V484.8H517.3V490.1H518.1V489.5H519.3V489.2H520.5V482.5H521.5V489.7H522.3V488.3H524.1V484.5H524.9V483.5H525.5V489.3H527.3V489.6H528.5V486.6H529.3V489.2H531.1V489.2H531.9V482.9H532.7V482.1H533.7V489.8H534.9V486.1H535.7V484.3H537.5V486.5H538.1V489.7H539.3V489.3H541.9V485.3H542.7V488.0H544.0V489.8H545.2V489.3H546.0V490.0H548.6V488.1H549.2V490.0H551.8V486.9H553.1V486.3H553.9V489.6H555.1V489.9H555.9V487.4H556.7V488.1H558.0V483.4H558.6V483.1H559.4V490.0H562.0V490.2H562.8V487.6H563.4V490.2H564.6V484.3H565.2V489.9H567.8V490.4H570.4V489.9H571.2V490.4H573.0V487.0H574.8V487.8H575.4V482.7H577.2V489.6H579.8V490.4H581.6V483.4H582.2V490.3H584.0V489.8H585.2V486.8H585.8V489.7H588.4V485.9H589.7V490.3H590.9V489.6H593.5V489.6H595.3V486.4H596.3V487.9H598.1V490.0H598.9V490.0H600.1V489.8H602.7V484.5H604.5V486.5H605.8V489.5H607.6V486.5H608.2V489.8H609.4V484.2H610.0V489.4H610.8V489.7H611.6V490.4H614.2V482.9H616.0V489.3H616.8V489.4H617.6V483.4H619.4V490.2H622.0V490.1H623.2V489.7H624.0V489.5H625.2V482.6H626.5V489.6H627.3V489.8H629.9V482.2H631.7V485.2H632.3V489.9H633.1V489.3H634.9V490.2H636.7V485.9H637.7V484.2H639.0V490.0H639.8V482.3H640.8V488.1H642.1V486.7H642.9V489.6H644.1V485.6H645.4V482.9H646.7V486.1H648.0V490.3H648.8V488.3H649.4V490.4H652.0V487.2H652.8V489.9H653.6V484.5H654.6V489.9H657.2V483.4H658.5V489.6H659.3V483.2H660.6V490.4H663.2V482.7H664.0V485.7H664.8V489.6H666.6V487.5H667.6V484.1H668.2V483.5H669.0V488.2H670.3V487.2H671.1V482.2H672.4V489.9H673.6V482.4H674.6V483.2H675.4V483.6H676.2V487.5H677.0V489.7H677.8V486.0H679.1V484.9H680.4V482.2H681.2V484.9H681.8V489.7H683.0V489.4H683.8V489.7H686.4V490.3H687.6V486.9H689.4V490.3H691.2V489.9H693.8V490.1H695.6V482.4H697.4V489.8H700.0V484.3H700.6V485.1H701.4V486.5H703.2V489.5H705.8V488.4H707.1V489.4H709.7V489.8H710.5V486.7H711.5V483.6H712.3V484.4H712.9V483.9H713.7V490.4H716.3V490.0H717.5V490.0H719.3V483.9H719.9V489.3H720.7V483.7H722.0V489.9H723.2V490.1H724.0V489.4H724.8V490.4H725.6V489.4H727.4V489.8H729.2V485.0H730.2V489.7H732.8V489.6H734.6V489.3H737.2V484.1H737.8V484.1H739.6V482.3H740.4V485.4H742.2V489.3H743.0V485.0H744.3V489.8H745.5V489.8H748.1V486.3H749.1V485.5H750.1V489.7H751.9V490.3H752.7V486.0H753.3V482.7H754.3V490.0H755.1V489.9H756.3V489.2H758.1V489.5H758.9V485.5H759.9V489.2H760.7V482.0H761.3V489.2H763.9V485.4H764.7V489.8H766.5V490.2H768.3V489.5H770.9V487.4H771.7V489.8H772.5V489.5H775.1V485.1H776.9V489.2H777.7V489.4H778.9V489.4H780.1V489.1H780.9V486.1H782.2V489.3H784.0V489.5H785.8V487.4H787.6V489.8H790.2V489.5H791.0V486.9H791.8V486.3H793.1V489.9H794.3V489.6H796.1V483.4H797.1V489.1H797.9V484.1H799.7V489.9H802.3V489.6H804.1V487.1H805.1V485.5H806.4V489.6H808.2V488.8H809.0V490.0H810.8V485.2H811.8V489.2H814.4V489.6H816.2V488.9H817.0V489.4H817.8V489.7H820.4V487.7H822.2V488.8H823.4V486.1H825.2V489.0H826.0V489.3H827.2V489.3H828.4V489.0H830.2V485.1H830.8V489.4H833.4V489.0H835.2V487.1H836.5V486.7H837.3V489.4H839.9V488.9H841.7V483.3H843.5V488.2H844.7V489.3H845.9V488.3H847.1V486.1H847.7V484.4H848.3V484.7H849.6V489.2H850.4V488.2H851.6V488.5H852.8V483.7H854.1V482.2H855.1V488.9H857.7V481.3H859.5V488.8H862.1V485.1H863.9V487.7H864.7V487.8H865.9V483.6H867.7V487.3H869.5V488.0H872.1V487.7H874.7V487.2H876.5V486.3H879.1V480.2H879.7V483.2H881.0V486.4H882.8V485.9H884.0V485.6H884.8V483.9H886.6V485.1H887.8V485.0H889.6V484.9H892.2V481.5H892.8V485.5H893.6V484.3H894.4V484.5H897.0V481.2H898.3V476.6H898.9V484.7H900.7V484.6H901.5V481.5H902.1V483.5H904.7V479.9H905.5V481.5H906.5V483.0H908.3V483.5H909.1V483.0H910.9V483.2H912.7V477.8H914.5V482.9H915.7V480.4H917.0V475.3H918.0V478.2H919.0V482.0H919.8V480.5H920.8V480.2H921.4V478.8H922.4V481.9H923.2V477.0H924.2V482.3H926.8V481.2H927.6V481.9H929.4V474.1H930.7V473.6H931.7V481.0H934.3V477.8H935.3V479.3H937.9V476.2H939.2V476.6H941.0V476.2H943.6V473.7H944.4V467.7H945.2V469.4H946.5V472.6H947.3V471.1H949.1V470.8H950.1V472.7H950.9V471.3H952.2V471.0H953.0V474.3H954.0V476.9H954.8V478.0H955.6V474.5H956.4V479.3H958.2V477.3H959.0V480.0H960.3V483.0H962.9V484.1H965.5V484.1H966.7V484.5H968.5V484.9H969.3V481.4H969.9V481.5H970.7V485.6H971.5V483.8H972.8V482.5H973.6V486.2H975.4V486.3H976.6V484.8H977.6V481.3H978.9V487.9H980.7V485.8H981.5V488.0H984.1V483.2H985.1V484.2H985.9V490.0H986.7V490.6H989.3V490.7H990.1V491.4H991.3V484.7H992.3V491.6H994.1V487.0H995.9V493.7H996.7V491.8H998.5V490.8H999.3V493.4H1001.1V487.8H1001.7V485.6H1002.5V492.9H1005.1V488.2H1006.4V492.1H1009.0V491.6H1011.6V484.9H1012.9V483.5H1014.7V481.9H1016.5V476.5H1018.3V479.1H1019.5V475.5H1020.7V472.1H1021.5V470.3H1024.1V461.8H1025.3V456.8H1027.9V450.2H1029.1V450.0H1030.3V450.6H1032.9V450.2H1034.1V451.5H1035.3V451.4H1036.1V440.0H1036.9V451.5H1038.7V443.1H1040.5V452.0H1041.7V452.0H1044.3V451.2H1046.1V451.3H1047.9V451.7H1049.1V452.7H1050.9V446.0H1051.7V441.8H1053.0V452.4H1054.8V450.1H1056.1V447.6H1056.9V440.9H1057.7V440.3H1058.5V445.0H1060.3V443.3H1062.1V448.0H1062.7V443.8H1063.5V450.7H1065.3V440.0H1066.6V447.2H1067.2V450.7H1069.8V449.8H1070.6V450.4H1071.8V449.5H1073.0V449.2H1074.8V447.0H1076.6V448.9H1079.2V449.4H1080.0V442.1H1080.6V449.9H1083.2V450.2H1085.8V441.6H1086.6V444.5H1088.4V445.4H1089.7V440.2H1090.7V440.8H1091.5V450.8H1092.3V451.8H1094.1V440.4H1095.4V451.2H1096.2V451.3H1097.4V442.3H1098.0V445.5H1098.8V452.0H1101.4V452.8H1104.0V452.7H1106.6V457.3H1107.4V447.7H1108.4V458.6H1109.6V450.0H1110.6V461.9H1111.4V451.7H1112.2V456.6H1113.5V452.8H1114.8V454.1H1115.6V463.5H1116.4V453.3H1117.2V456.5H1119.0V465.1H1119.8V459.7H1120.6V466.5H1123.2V466.6H1125.0V461.0H1126.0V458.9H1126.6V460.3H1127.2V465.8H1128.2V462.3H1129.2V469.6H1130.4V470.7H1133.0V460.5H1134.8V467.8H1136.6V465.5H1137.4V473.0H1139.2V473.9H1140.0V474.0H1142.6V475.0H1143.4V469.1H1144.2V475.1H1146.0V476.3H1148.6V473.6H1149.9V477.3H1152.5V476.8H1153.5V474.3H1154.8V479.1H1156.0V477.8H1156.6V472.2H1157.9V481.1H1159.7V480.6H1162.3V482.5H1164.1V483.3H1164.9V483.3H1165.0" fill="none" stroke="#8f5fc0" stroke-width="0.75"/><path d="M250.3 494.6V494.6H251.3V495.2H251.9V493.0H253.7V491.1H254.5V500.4H255.8V494.3H256.6V499.7H258.4V491.1H259.2V500.1H259.8V498.5H260.6V498.9H261.2V490.5H263.8V491.1H265.0V492.8H266.3V493.5H267.6V500.5H268.2V494.0H270.0V490.2H271.8V500.1H273.6V496.5H275.4V490.3H278.0V498.3H278.6V498.4H280.4V497.0H281.4V491.1H282.6V490.3H283.4V490.4H284.6V499.5H285.6V498.9H287.4V493.2H288.4V490.7H290.2V498.6H292.0V495.1H293.8V494.2H294.6V494.9H295.2V499.0H297.0V499.2H298.8V497.1H299.6V493.1H300.4V491.3H302.2V491.0H303.4V492.5H304.4V490.5H305.6V497.5H306.2V496.1H306.8V490.9H308.6V490.5H310.4V493.5H311.4V494.8H313.2V496.1H314.5V490.9H317.1V491.1H318.9V490.6H321.5V490.8H323.3V493.7H323.9V490.4H324.7V497.1H326.5V497.0H327.3V490.8H329.1V490.9H329.9V490.9H332.5V497.8H334.3V490.3H336.1V493.2H336.9V490.3H339.5V491.0H340.3V499.8H341.1V497.6H342.9V490.9H343.7V498.1H344.3V493.0H344.9V493.0H345.7V496.3H347.5V498.3H348.1V499.0H348.7V497.3H350.0V491.2H352.6V498.0H353.6V493.9H354.4V492.7H355.0V495.5H355.6V491.0H358.2V494.3H358.8V498.1H360.6V500.3H361.6V496.7H362.2V496.3H363.2V497.7H364.0V490.6H365.2V491.1H367.0V491.3H367.8V490.2H368.6V497.4H369.9V499.8H370.9V490.5H373.5V496.3H374.8V490.7H377.4V492.8H378.7V496.9H379.7V497.9H380.7V495.2H381.3V497.4H383.1V490.5H385.7V492.9H386.7V490.8H389.3V491.1H391.1V490.8H391.9V494.0H393.7V492.7H394.7V498.2H395.5V497.8H396.8V496.6H398.6V495.4H399.6V500.1H400.6V490.9H401.8V494.7H402.4V500.0H403.7V490.5H405.5V498.1H406.8V493.5H407.8V490.9H408.6V490.9H409.4V496.2H410.0V493.4H411.8V494.0H413.6V490.2H416.2V491.3H417.0V490.6H419.6V499.8H420.9V497.0H421.7V491.3H422.5V498.8H423.3V491.1H424.5V495.2H426.3V492.5H427.1V491.0H428.3V495.1H429.1V495.7H429.7V490.8H432.3V490.4H434.1V498.3H435.9V491.2H438.5V491.2H439.7V493.5H441.0V499.4H441.8V490.8H442.6V494.5H443.6V490.8H445.4V491.0H446.2V494.1H446.8V498.4H448.1V494.2H449.1V500.3H450.4V495.0H451.4V490.4H452.2V490.3H453.0V495.3H454.3V490.3H455.1V500.3H456.4V493.6H458.2V490.6H460.8V491.1H462.6V492.6H463.9V490.5H465.7V499.1H467.0V492.8H467.6V495.8H468.4V492.9H469.4V490.8H472.0V491.0H472.8V490.7H474.6V493.0H475.9V500.6H476.7V490.4H479.3V498.3H480.3V497.2H482.1V493.2H483.9V500.6H484.7V497.9H486.5V499.9H487.8V494.7H489.1V491.4H490.9V492.8H492.2V499.3H493.5V492.9H494.5V500.4H496.3V491.1H498.9V497.2H499.5V496.0H500.5V491.1H502.3V499.5H502.9V499.8H504.2V490.6H506.0V498.3H507.0V493.0H508.3V491.3H510.1V490.6H511.9V499.2H513.2V494.3H514.5V496.2H515.8V493.7H516.6V490.9H517.4V492.4H518.4V490.8H519.2V494.6H519.8V491.2H520.6V491.0H522.4V498.4H523.2V490.9H524.4V500.6H525.7V490.6H528.3V490.6H530.1V498.8H530.9V490.4H533.5V493.3H535.3V490.9H537.9V490.5H539.1V490.7H540.3V490.4H541.1V496.3H542.9V498.1H543.7V497.7H544.3V495.3H546.1V499.1H547.1V495.8H547.9V490.6H548.7V498.2H549.3V497.7H549.9V498.5H551.2V490.4H553.8V497.9H554.4V496.9H555.7V497.2H556.3V490.3H557.1V490.9H558.3V490.5H560.1V491.2H560.9V490.3H562.1V498.6H562.7V498.7H563.3V491.3H565.1V490.8H565.9V491.1H567.1V493.2H567.7V496.3H568.3V491.0H570.1V500.0H571.9V490.5H573.7V499.7H574.3V491.4H575.1V490.5H576.3V490.3H578.9V490.5H579.7V491.0H582.3V496.2H584.1V496.4H584.9V496.4H585.5V493.8H586.8V498.8H587.8V493.3H589.6V499.4H590.2V496.8H591.2V494.8H593.0V494.3H594.3V490.8H596.1V499.7H596.7V500.3H598.5V491.5H601.1V498.5H602.1V491.3H602.9V494.6H604.2V490.9H606.0V492.9H607.3V492.9H608.3V497.6H609.6V490.8H611.4V499.8H612.7V498.9H613.3V495.0H614.3V491.1H615.1V490.8H617.7V490.8H618.5V501.0H619.8V490.8H620.6V500.6H621.4V494.6H622.7V491.4H624.5V493.1H625.5V491.0H627.3V490.6H629.9V491.1H632.5V499.1H633.3V499.6H633.9V500.2H634.7V491.1H635.9V491.1H637.1V491.5H638.9V496.8H639.5V491.4H640.3V491.3H641.5V490.7H644.1V495.8H644.7V491.4H646.5V490.7H649.1V498.9H650.1V495.1H651.1V491.6H651.9V494.4H652.9V499.1H653.5V491.0H655.3V490.7H657.9V495.2H659.7V498.7H660.3V499.5H662.1V493.5H662.7V490.8H663.5V500.5H664.3V497.7H665.6V494.8H667.4V490.7H668.2V496.4H669.0V491.6H669.8V490.8H672.4V493.3H673.4V491.5H674.2V494.7H675.5V491.2H676.3V499.1H677.6V493.9H679.4V491.6H680.6V493.2H681.6V500.3H683.4V500.5H684.4V496.1H685.7V491.6H687.5V495.4H688.1V495.1H688.9V491.0H690.1V495.5H691.9V494.8H692.5V493.4H694.3V491.0H695.1V491.5H696.3V499.0H696.9V491.0H699.5V500.8H701.3V493.4H702.1V490.6H702.9V491.0H705.5V491.1H708.1V499.2H709.1V491.4H710.3V500.0H711.6V498.7H713.4V500.4H714.0V491.2H715.2V499.3H716.5V500.8H717.5V500.8H719.3V499.6H720.1V497.4H721.4V491.0H722.6V499.9H724.4V490.6H725.2V490.4H726.0V491.5H727.2V490.7H728.0V490.4H729.8V498.4H730.4V490.6H731.6V497.9H732.6V495.4H733.9V491.2H735.7V498.3H737.5V494.7H738.5V491.3H741.1V491.4H742.3V495.7H742.9V495.2H744.7V497.2H745.7V492.4H747.5V496.1H748.1V490.8H750.7V499.7H751.5V490.6H754.1V492.9H754.9V491.2H756.7V497.4H758.0V490.7H760.6V490.8H761.4V496.0H763.2V497.8H764.5V490.8H767.1V490.2H768.9V495.6H769.5V493.1H771.3V491.1H772.5V499.2H774.3V499.9H775.6V490.5H776.8V497.6H777.4V494.5H778.0V494.4H779.0V500.0H779.6V490.8H780.8V491.0H781.6V490.7H784.2V492.9H784.8V492.4H785.6V490.4H786.4V490.3H787.2V499.6H787.8V490.3H790.4V490.8H791.6V490.8H794.2V499.6H796.0V497.7H796.6V491.0H798.4V499.8H799.7V492.9H800.5V496.1H801.8V490.4H802.6V496.4H804.4V490.5H805.2V490.2H807.8V491.0H808.6V490.2H810.4V490.8H811.6V490.7H812.4V491.0H815.0V498.7H816.8V500.0H818.1V498.8H819.1V490.9H819.9V490.1H821.7V494.2H823.0V490.6H824.2V490.3H826.8V489.7H829.4V494.7H830.7V490.3H832.5V494.7H834.3V489.8H835.1V498.0H836.9V493.0H837.9V489.7H838.7V496.2H839.3V490.5H841.1V490.5H843.7V489.9H846.3V493.4H847.6V490.4H848.8V490.2H850.0V493.1H850.6V489.9H851.8V489.8H853.6V489.8H854.8V498.6H855.8V498.2H856.8V490.0H857.6V494.3H858.9V497.6H859.7V489.8H860.5V495.0H861.5V494.8H863.3V496.0H864.1V491.7H864.7V488.8H865.5V493.3H866.5V491.3H868.3V489.2H869.1V489.1H869.9V497.5H871.2V498.3H871.8V495.3H872.8V488.3H874.6V492.0H876.4V487.9H877.6V487.9H879.4V491.9H880.7V487.9H881.9V495.9H882.9V494.3H884.7V487.1H885.9V491.2H886.5V486.2H887.3V489.0H889.1V491.1H890.4V492.2H891.4V493.1H892.4V493.3H894.2V486.4H896.0V492.7H896.8V485.2H899.4V485.8H900.2V485.6H902.0V492.9H902.8V492.9H903.8V485.2H906.4V486.9H907.4V490.6H908.7V484.5H910.5V486.3H911.5V493.2H913.3V491.6H914.6V483.9H915.4V483.3H916.6V484.2H918.4V483.1H919.2V483.8H921.0V483.2H922.8V488.3H923.6V490.4H924.9V486.5H925.7V492.5H926.5V488.0H928.3V485.3H929.3V490.6H929.9V482.7H930.7V490.0H931.5V491.4H932.1V490.9H933.9V490.7H934.7V481.4H937.3V479.8H939.1V478.3H940.3V482.2H941.6V479.7H942.6V478.9H943.6V484.1H944.9V474.5H946.1V473.4H948.7V476.8H949.3V473.9H950.1V476.4H950.9V476.9H951.9V479.3H953.7V478.5H955.0V482.9H956.3V480.4H958.9V485.2H960.7V487.4H961.7V485.0H962.9V484.7H965.5V486.3H967.3V485.4H968.1V487.7H969.1V486.7H970.3V489.2H971.6V486.4H972.8V489.7H973.6V490.3H974.2V490.3H975.0V487.7H977.6V487.8H980.2V494.3H981.2V489.3H983.0V497.7H984.0V489.8H985.8V494.8H986.6V499.7H987.9V491.3H989.1V492.2H990.9V492.8H991.7V492.8H994.3V494.0H996.9V495.1H998.1V503.1H999.9V495.4H1001.7V497.8H1003.5V499.5H1005.3V496.3H1007.1V502.0H1008.1V492.5H1009.3V492.6H1011.9V491.3H1012.7V491.4H1013.5V490.4H1014.7V489.5H1015.5V486.8H1016.3V486.8H1018.1V488.8H1019.4V477.1H1020.6V480.7H1021.6V471.7H1024.2V462.8H1026.0V455.2H1028.6V451.1H1029.4V451.6H1030.6V451.7H1031.8V451.3H1033.0V465.5H1034.0V451.7H1036.6V458.6H1037.4V451.8H1039.2V460.3H1039.8V455.1H1040.4V453.1H1041.2V463.5H1042.2V452.2H1044.8V462.0H1045.8V452.8H1047.6V464.1H1048.9V461.6H1049.9V463.7H1050.5V457.2H1051.1V467.3H1052.9V453.5H1054.1V459.4H1055.4V464.2H1057.2V453.0H1059.0V452.6H1061.6V452.2H1064.2V461.7H1066.0V457.9H1067.0V451.9H1067.8V459.1H1068.8V454.6H1069.6V461.5H1070.2V462.3H1070.8V461.8H1071.8V454.5H1073.6V450.8H1075.4V463.3H1076.4V450.6H1077.6V461.3H1078.6V454.7H1080.4V453.9H1081.2V450.9H1083.8V457.2H1084.8V458.1H1085.4V460.6H1086.2V451.3H1088.8V466.1H1089.4V451.4H1090.2V465.9H1091.0V451.9H1092.2V466.2H1093.5V460.2H1095.3V452.3H1096.5V452.5H1099.1V466.2H1099.9V456.6H1101.7V453.7H1102.5V453.6H1105.1V455.8H1107.7V459.6H1108.5V470.5H1109.3V461.7H1110.1V462.5H1112.7V463.6H1115.3V474.7H1117.1V465.6H1117.9V466.3H1120.5V469.9H1121.1V467.5H1121.9V467.6H1122.7V475.4H1123.3V468.6H1124.5V473.8H1125.3V476.7H1126.1V468.9H1126.9V469.5H1128.7V478.1H1130.5V477.2H1131.1V482.6H1132.1V484.9H1133.1V476.7H1133.9V472.4H1135.7V482.6H1137.5V481.5H1139.3V481.6H1140.3V483.3H1141.1V477.6H1142.4V475.6H1143.2V484.8H1144.0V476.2H1146.6V477.2H1147.4V486.4H1148.0V478.0H1149.2V487.1H1149.8V484.3H1150.6V487.8H1151.6V484.9H1152.4V479.0H1153.6V490.0H1155.4V481.2H1158.0V481.8H1159.8V491.9H1161.1V489.8H1162.9V486.4H1164.7V484.6H1165.0" fill="none" stroke="#2aa6d6" stroke-width="0.95"/><path d="M250.3 491.8V491.8H252.1V490.5H254.7V494.9H255.3V489.9H256.5V490.2H259.1V490.5H260.3V490.6H262.9V489.9H263.7V490.1H264.5V493.2H265.5V490.6H268.1V490.6H270.7V490.8H271.9V493.3H272.7V494.4H274.0V490.3H276.6V490.3H278.4V490.8H279.6V490.7H280.4V490.5H281.6V490.6H282.4V492.4H284.2V494.7H285.5V490.1H286.3V491.4H287.1V490.7H289.7V494.3H291.5V490.4H293.3V490.3H295.1V489.7H296.9V491.4H298.7V492.5H300.0V495.2H300.6V490.9H302.4V490.2H305.0V490.5H307.6V490.4H308.4V490.2H310.2V490.8H311.4V490.3H313.2V490.6H314.0V489.7H315.8V489.8H317.0V490.1H319.6V490.6H321.4V495.1H322.0V492.3H323.0V489.9H324.8V494.7H325.8V491.7H327.1V490.1H328.3V492.3H329.3V493.9H330.6V492.6H332.4V490.2H333.6V489.8H334.8V490.8H336.0V490.6H337.2V492.6H338.0V490.7H339.2V490.7H340.0V490.2H341.2V490.3H343.0V490.2H344.8V489.9H347.4V495.2H349.2V489.7H350.4V490.4H352.2V490.7H353.0V490.7H353.8V495.0H355.6V490.4H358.2V492.0H358.8V493.4H359.4V490.1H360.2V493.2H362.0V490.0H363.8V492.0H364.4V490.7H365.6V494.8H367.4V492.3H368.4V489.8H371.0V490.7H371.8V489.8H372.6V494.7H373.2V493.3H375.0V492.7H375.6V490.1H377.4V493.0H378.4V494.2H379.0V490.4H379.8V493.7H381.1V490.5H383.7V491.5H385.0V490.2H386.8V489.7H389.4V494.1H390.4V492.2H391.7V495.0H392.3V489.8H394.1V490.5H396.7V490.7H397.5V489.9H400.1V490.3H400.9V489.9H403.5V491.4H404.1V494.6H405.4V490.7H407.2V493.3H409.0V490.4H409.8V491.5H411.6V490.7H412.8V493.9H413.6V490.0H416.2V490.4H418.0V490.3H420.6V490.7H423.2V490.5H425.8V489.9H428.4V489.9H429.6V490.8H432.2V490.4H434.8V490.0H436.0V493.4H437.8V490.5H439.6V490.8H441.4V490.3H443.2V490.4H444.4V494.4H445.7V494.1H447.0V494.6H448.8V490.3H449.6V490.6H452.2V490.3H453.0V493.9H453.8V490.9H454.6V490.8H455.8V489.9H457.0V490.8H457.8V492.6H458.4V489.8H459.2V491.4H460.2V489.7H462.0V490.2H464.6V494.3H466.4V490.4H467.6V491.6H468.6V490.8H471.2V490.3H472.0V490.6H473.8V491.7H474.8V490.5H476.6V490.5H477.4V490.6H478.2V490.5H479.4V489.9H480.6V489.8H483.2V490.8H484.4V490.4H487.0V490.3H489.6V489.8H490.4V493.5H492.2V489.8H494.0V494.8H494.6V492.4H496.4V490.8H498.2V490.4H500.8V490.3H502.6V490.1H503.8V493.6H504.4V490.0H505.2V494.0H506.5V490.4H507.7V494.5H509.0V490.4H510.2V492.8H511.2V494.9H512.5V490.1H515.1V490.5H516.9V490.8H518.7V490.5H519.5V489.9H520.3V490.3H521.5V490.0H524.1V489.8H525.3V489.9H527.9V491.9H528.7V489.8H529.5V490.4H530.3V492.7H531.3V489.9H532.5V490.6H533.3V491.0H535.1V494.8H535.7V490.4H536.9V493.0H537.5V490.2H538.7V490.4H539.5V490.1H542.1V490.3H544.7V490.7H545.5V490.3H547.3V490.1H549.9V492.4H550.7V490.4H553.3V492.1H553.9V490.6H555.1V492.1H556.9V490.8H557.7V490.3H559.5V490.1H560.3V491.5H561.6V490.1H562.8V490.0H564.0V490.9H565.8V490.1H567.6V490.8H570.2V490.1H572.8V493.9H573.8V489.9H574.6V490.5H575.4V494.2H576.0V491.6H577.8V495.0H579.6V492.8H580.9V491.0H582.7V494.4H583.7V489.9H586.3V491.9H587.6V490.5H589.4V490.1H592.0V490.9H594.6V490.3H595.8V490.4H597.0V490.2H598.8V495.1H600.6V489.9H603.2V494.8H603.8V492.7H604.4V490.9H605.2V490.4H607.8V491.1H609.6V493.1H610.4V490.3H611.2V490.0H613.8V490.7H615.0V490.6H616.2V492.6H617.0V493.5H618.8V490.8H620.6V490.5H621.8V490.9H622.6V494.9H623.2V491.8H624.2V490.9H625.4V490.7H626.2V490.4H628.0V490.3H628.8V490.9H631.4V491.5H633.2V492.9H633.8V495.2H634.4V490.4H636.2V490.2H637.4V490.3H638.2V490.2H639.0V490.8H640.2V491.0H642.8V490.4H645.4V495.3H647.2V490.5H649.8V490.3H650.6V491.0H651.8V492.7H652.6V490.0H655.2V490.5H657.0V494.5H658.3V490.1H660.1V490.5H662.7V494.6H664.0V491.1H666.6V491.1H668.4V490.5H671.0V490.4H672.2V490.0H674.0V490.9H675.8V495.3H676.6V490.1H677.4V490.2H678.2V495.5H679.0V491.1H680.8V490.6H681.6V493.3H682.6V490.7H683.4V490.4H686.0V493.3H687.3V491.7H687.9V495.2H688.7V491.1H689.9V490.6H692.5V490.3H693.7V493.5H694.3V493.5H695.6V490.4H698.2V490.2H700.0V490.5H700.8V490.3H703.4V495.4H704.4V492.1H705.4V495.0H706.7V490.0H708.5V490.5H709.3V492.0H710.3V490.0H712.1V490.2H714.7V490.7H715.9V490.3H718.5V495.3H719.1V490.6H721.7V492.5H723.0V490.5H723.8V490.7H724.6V494.0H725.2V491.0H726.0V490.4H726.8V490.2H729.4V490.1H730.2V490.0H731.4V490.7H732.6V490.6H735.2V492.1H735.8V490.0H737.6V489.9H738.8V490.3H740.0V492.1H741.3V491.9H741.9V492.9H742.7V490.9H743.5V495.4H744.5V489.8H745.7V489.9H748.3V489.8H750.9V490.4H753.5V490.2H755.3V489.9H757.9V490.1H759.1V490.1H760.3V489.7H761.5V490.4H764.1V491.3H765.9V490.8H768.5V489.7H770.3V490.0H772.9V490.0H774.1V490.4H775.9V490.6H777.7V490.8H779.5V491.7H780.3V490.4H782.1V495.0H783.4V490.0H786.0V490.7H787.2V490.7H789.8V492.8H791.1V489.6H792.9V489.8H795.5V491.9H797.3V490.0H798.1V489.5H799.9V489.9H801.7V490.2H802.5V491.1H803.3V491.6H803.9V492.8H804.9V493.2H805.5V490.3H808.1V490.0H809.3V490.0H810.1V490.0H811.3V490.1H813.1V493.4H813.9V494.1H814.5V490.4H817.1V491.5H818.1V493.2H819.4V489.8H821.2V491.1H821.8V489.3H823.6V494.4H824.9V490.1H825.7V490.2H828.3V491.5H829.3V489.1H830.1V489.7H831.3V493.9H832.1V489.4H834.7V489.2H835.9V491.1H837.7V489.3H839.5V489.4H840.7V489.6H842.5V489.0H843.7V490.9H845.0V489.8H847.6V489.1H848.4V491.3H849.0V488.9H850.2V490.5H851.2V488.9H852.0V489.3H853.2V491.1H854.0V488.8H855.2V489.3H857.8V489.3H859.0V488.6H859.8V489.1H862.4V488.9H864.2V488.3H866.8V488.2H869.4V488.4H872.0V490.2H873.3V487.2H875.1V487.5H876.9V487.1H879.5V491.3H880.5V490.7H881.1V486.9H882.9V486.7H884.7V487.0H886.5V486.2H888.3V485.8H889.5V486.2H892.1V485.4H893.3V485.6H894.5V485.5H897.1V485.2H897.9V485.0H899.1V488.1H899.7V489.3H901.0V484.4H903.6V484.1H905.4V489.1H906.2V483.8H908.8V483.7H910.0V484.0H911.2V487.9H912.2V483.1H913.0V483.2H913.8V483.3H914.6V482.8H915.8V483.1H917.0V483.2H919.6V483.5H922.2V482.7H924.0V482.1H926.6V485.8H927.9V485.1H928.7V481.7H930.5V481.5H932.3V484.6H932.9V481.1H934.1V480.6H935.3V484.6H935.9V483.5H936.5V479.5H939.1V477.3H941.7V475.3H942.5V474.9H945.1V475.6H946.9V471.9H948.7V471.8H951.3V474.9H953.1V476.8H954.3V477.2H955.5V478.5H958.1V480.8H959.3V483.9H959.9V484.4H961.2V485.1H963.0V484.3H964.2V484.9H966.0V486.5H967.3V487.7H969.1V486.5H970.9V485.8H972.1V486.0H973.9V487.2H976.5V486.9H979.1V489.2H980.9V489.2H983.5V491.8H984.5V490.3H986.3V490.7H988.1V492.6H988.7V490.9H989.9V491.9H991.1V495.2H992.1V492.5H992.9V493.3H995.5V493.8H997.3V494.1H999.9V494.1H1001.7V494.1H1003.5V493.1H1004.7V493.5H1007.3V492.5H1008.5V492.5H1009.7V493.5H1011.0V494.8H1011.6V490.7H1014.2V489.6H1016.0V485.4H1017.8V480.9H1019.6V475.4H1020.8V472.9H1021.6V470.8H1022.4V468.4H1025.0V458.8H1027.6V451.1H1028.4V450.7H1029.2V451.7H1030.0V457.8H1031.8V454.0H1033.6V451.9H1034.8V451.1H1036.0V451.7H1038.6V451.6H1039.4V455.2H1040.4V451.8H1041.2V455.0H1042.5V455.0H1043.5V452.4H1045.3V452.5H1046.5V452.9H1048.3V458.5H1049.1V453.1H1049.9V452.4H1051.7V453.5H1052.9V453.0H1053.7V459.7H1055.5V459.0H1056.5V453.1H1059.1V451.7H1059.9V452.3H1062.5V451.4H1063.7V453.7H1065.5V454.7H1066.5V452.8H1067.5V450.8H1068.3V450.2H1070.1V451.1H1072.7V452.3H1073.3V453.1H1074.6V450.3H1075.8V450.1H1077.6V450.1H1079.4V449.7H1082.0V453.1H1083.0V450.9H1083.8V454.1H1084.8V451.3H1085.6V451.6H1086.4V453.5H1087.7V451.1H1090.3V452.2H1091.1V451.2H1091.9V451.4H1092.7V457.1H1093.3V453.7H1094.1V452.0H1094.9V451.9H1096.1V452.6H1097.9V452.9H1098.7V452.2H1099.5V452.9H1100.7V453.0H1103.3V459.5H1104.3V460.0H1105.1V455.2H1106.9V457.5H1108.7V459.9H1109.9V467.4H1111.2V463.0H1113.8V464.1H1115.0V464.2H1115.8V464.6H1116.6V464.9H1118.4V465.9H1121.0V466.2H1122.8V467.8H1125.4V468.2H1126.6V476.1H1127.4V468.9H1129.2V475.3H1130.0V472.7H1131.8V471.7H1133.0V471.5H1133.8V472.5H1134.6V471.9H1136.4V472.8H1139.0V473.8H1141.6V476.1H1143.4V475.5H1144.2V478.9H1144.8V476.6H1146.0V476.6H1147.2V476.5H1148.0V477.0H1149.8V480.5H1150.6V478.5H1152.4V482.7H1153.7V480.0H1156.3V481.1H1157.1V483.3H1158.1V483.8H1158.7V485.5H1160.0V481.4H1162.6V484.6H1163.6V483.7H1165.0" fill="none" stroke="#5f7a5a" stroke-width="0.5" opacity="0.7"/><line x1="1165.1" y1="367.5" x2="1165.1" y2="521.5" stroke="#f0c890" stroke-width="0.85"/><line x1="1169.5" y1="380.6" x2="1178" y2="380.6" stroke="#2aa6d6" stroke-width="2"/><line x1="1169.5" y1="391" x2="1178" y2="391" stroke="#8fbf70" stroke-width="2" stroke-dasharray="1.3 1.3"/><line x1="1169.5" y1="401.6" x2="1178" y2="401.6" stroke="#9060c0" stroke-width="2"/></svg>
<div class="t" style="left:-60.400000000000006px;width:300px;text-align:right;top:365.51px;font-size:7.2px;color:#555;font-weight:normal;letter-spacing:-0.4px">500</div>
<div class="t" style="left:-60.400000000000006px;width:300px;text-align:right;top:409.51px;font-size:7.2px;color:#555;font-weight:normal;letter-spacing:-0.4px">400</div>
<div class="t" style="left:-60.400000000000006px;width:300px;text-align:right;top:453.51px;font-size:7.2px;color:#555;font-weight:normal;letter-spacing:-0.4px">300</div>
<div class="t" style="left:-60.400000000000006px;width:300px;text-align:right;top:497.51px;font-size:7.2px;color:#555;font-weight:normal;letter-spacing:-0.4px">200</div>
<div class="t" style="left:203px;top:440.5px;width:20px;text-align:center;font-size:7.6px;font-weight:bold;color:#333;transform:rotate(-90deg)">Value</div>
<div class="t" style="left:208.0px;width:200px;text-align:center;top:532.87px;font-size:7.6px;color:#444;font-weight:normal;letter-spacing:-0.1px">09.05-14:00:00</div>
<div class="t" style="left:274.97px;width:200px;text-align:center;top:532.87px;font-size:7.6px;color:#444;font-weight:normal;letter-spacing:-0.1px">09.05-15:00:00</div>
<div class="t" style="left:341.94px;width:200px;text-align:center;top:532.87px;font-size:7.6px;color:#444;font-weight:normal;letter-spacing:-0.1px">09.05-16:00:00</div>
<div class="t" style="left:408.90999999999997px;width:200px;text-align:center;top:532.87px;font-size:7.6px;color:#444;font-weight:normal;letter-spacing:-0.1px">09.05-17:00:00</div>
<div class="t" style="left:475.88px;width:200px;text-align:center;top:532.87px;font-size:7.6px;color:#444;font-weight:normal;letter-spacing:-0.1px">09.05-18:00:00</div>
<div class="t" style="left:542.85px;width:200px;text-align:center;top:532.87px;font-size:7.6px;color:#444;font-weight:normal;letter-spacing:-0.1px">09.05-19:00:00</div>
<div class="t" style="left:609.8199999999999px;width:200px;text-align:center;top:532.87px;font-size:7.6px;color:#444;font-weight:normal;letter-spacing:-0.1px">09.05-20:00:00</div>
<div class="t" style="left:676.79px;width:200px;text-align:center;top:532.87px;font-size:7.6px;color:#444;font-weight:normal;letter-spacing:-0.1px">09.05-21:00:00</div>
<div class="t" style="left:743.76px;width:200px;text-align:center;top:532.87px;font-size:7.6px;color:#444;font-weight:normal;letter-spacing:-0.1px">09.05-22:00:00</div>
<div class="t" style="left:810.73px;width:200px;text-align:center;top:532.87px;font-size:7.6px;color:#444;font-weight:normal;letter-spacing:-0.1px">09.05-23:00:00</div>
<div class="t" style="left:877.7px;width:200px;text-align:center;top:532.87px;font-size:7.6px;color:#444;font-weight:normal;letter-spacing:-0.1px">09.06-00:00:00</div>
<div class="t" style="left:944.6700000000001px;width:200px;text-align:center;top:532.87px;font-size:7.6px;color:#444;font-weight:normal;letter-spacing:-0.1px">09.06-01:00:00</div>
<div class="t" style="left:1011.6399999999999px;width:200px;text-align:center;top:532.87px;font-size:7.6px;color:#444;font-weight:normal;letter-spacing:-0.1px">09.06-02:00:00</div>
<div class="t" style="left:607px;width:200px;text-align:center;top:543.57px;font-size:7.6px;color:#333;font-weight:bold;">Time</div>
<div class="b" style="left:1093.5px;top:367.3px;width:72.09999999999991px;height:8.699999999999989px;background:#fff;border:0.9px solid #606060"></div>
<div class="t" style="left:1095.0px;top:367.19px;font-size:8.4px;color:#2a2a2a;font-weight:normal;transform:scaleX(0.8888);transform-origin:0 0;">06/09/2019 02:49:00</div>
<div class="b" style="left:1059.4px;top:376.3px;width:106.19999999999982px;height:9.199999999999989px;background:#fff;border:0.9px solid #606060"></div>
<div class="t" style="left:1061.2px;top:376.69px;font-size:8.4px;color:#2a2a2a;font-weight:normal;transform:scaleX(0.8573);transform-origin:0 0;">Actual - Temp_anode = 247,931</div>
<div class="b" style="left:1103.4px;top:385.7px;width:62.19999999999982px;height:8.800000000000011px;background:#fff;border:0.9px solid #606060"></div>
<div class="t" style="left:1105.0px;top:385.69px;font-size:8.4px;color:#2a2a2a;font-weight:normal;transform:scaleX(0.8267);transform-origin:0 0;">Setpoint = 247,931</div>
<div class="b" style="left:1047.5px;top:395.2px;width:118.09999999999991px;height:8.5px;background:#fff;border:0.9px solid #606060"></div>
<div class="t" style="left:1049.5px;top:394.89px;font-size:8.4px;color:#2a2a2a;font-weight:normal;transform:scaleX(0.8521);transform-origin:0 0;">Optimised - Temp_anode = 247,986</div>
<div class="t" style="left:1182.6px;top:376.49px;font-size:8.4px;color:#444;font-weight:normal;transform:scaleX(0.8503);transform-origin:0 0;">Actual - Temp_anode</div>
<div class="t" style="left:1182.6px;top:386.89px;font-size:8.4px;color:#444;font-weight:normal;transform:scaleX(0.8337);transform-origin:0 0;">Setpoint</div>
<div class="t" style="left:1182.6px;top:397.49px;font-size:8.4px;color:#444;font-weight:normal;transform:scaleX(0.8354);transform-origin:0 0;">Optimised - Temp_anode</div>
<div class="b" style="left:201.4px;top:565.3px;width:1008px;height:14.6px;background:#f7f7f7;border:1px solid #8a8a8a;border-radius:2px"></div>
<div class="b" style="left:201.4px;top:565.3px;width:620.5px;height:14.6px;background:#2b579a;border-radius:2px 0 0 2px"></div>
<div class="b" style="left:1219.5px;top:565.5px;width:49.2px;height:13.8px;background:#fbfbfb;border:1px solid #cfcfcf;border-radius:2px"></div>
<div class="t" style="left:1144px;width:200px;text-align:center;top:569.04px;font-size:7.4px;color:#222;font-weight:normal;letter-spacing:-0.2px">Stop</div>
<div class="t" style="left:1042px;top:549.11px;font-size:13.1px;color:rgba(120,120,120,0.5);font-weight:normal;">Activar Windows</div>
<div class="t" style="left:1042px;top:565.66px;font-size:9.85px;color:rgba(120,120,120,0.5);font-weight:normal;">Ve a Configuración para activar Windows.</div>
<div class="b" style="left:0;top:592px;width:1280px;height:13.6px;background:#f7f7f7;border-bottom:1px solid #d0d0d0"></div>
<div class="t" style="left:3px;top:596.12px;font-size:7.3px;color:#444;font-weight:normal;">For Help, press F1</div>
<div class="t" style="left:1224px;top:595.42px;font-size:7.3px;color:#aaa;font-weight:normal;">CAP</div>
<div class="t" style="left:1241px;top:595.42px;font-size:7.3px;color:#444;font-weight:bold;">NUM</div>
<div class="t" style="left:1262.6px;top:595.42px;font-size:7.3px;color:#aaa;font-weight:normal;">SCRL</div>
</body></html>
